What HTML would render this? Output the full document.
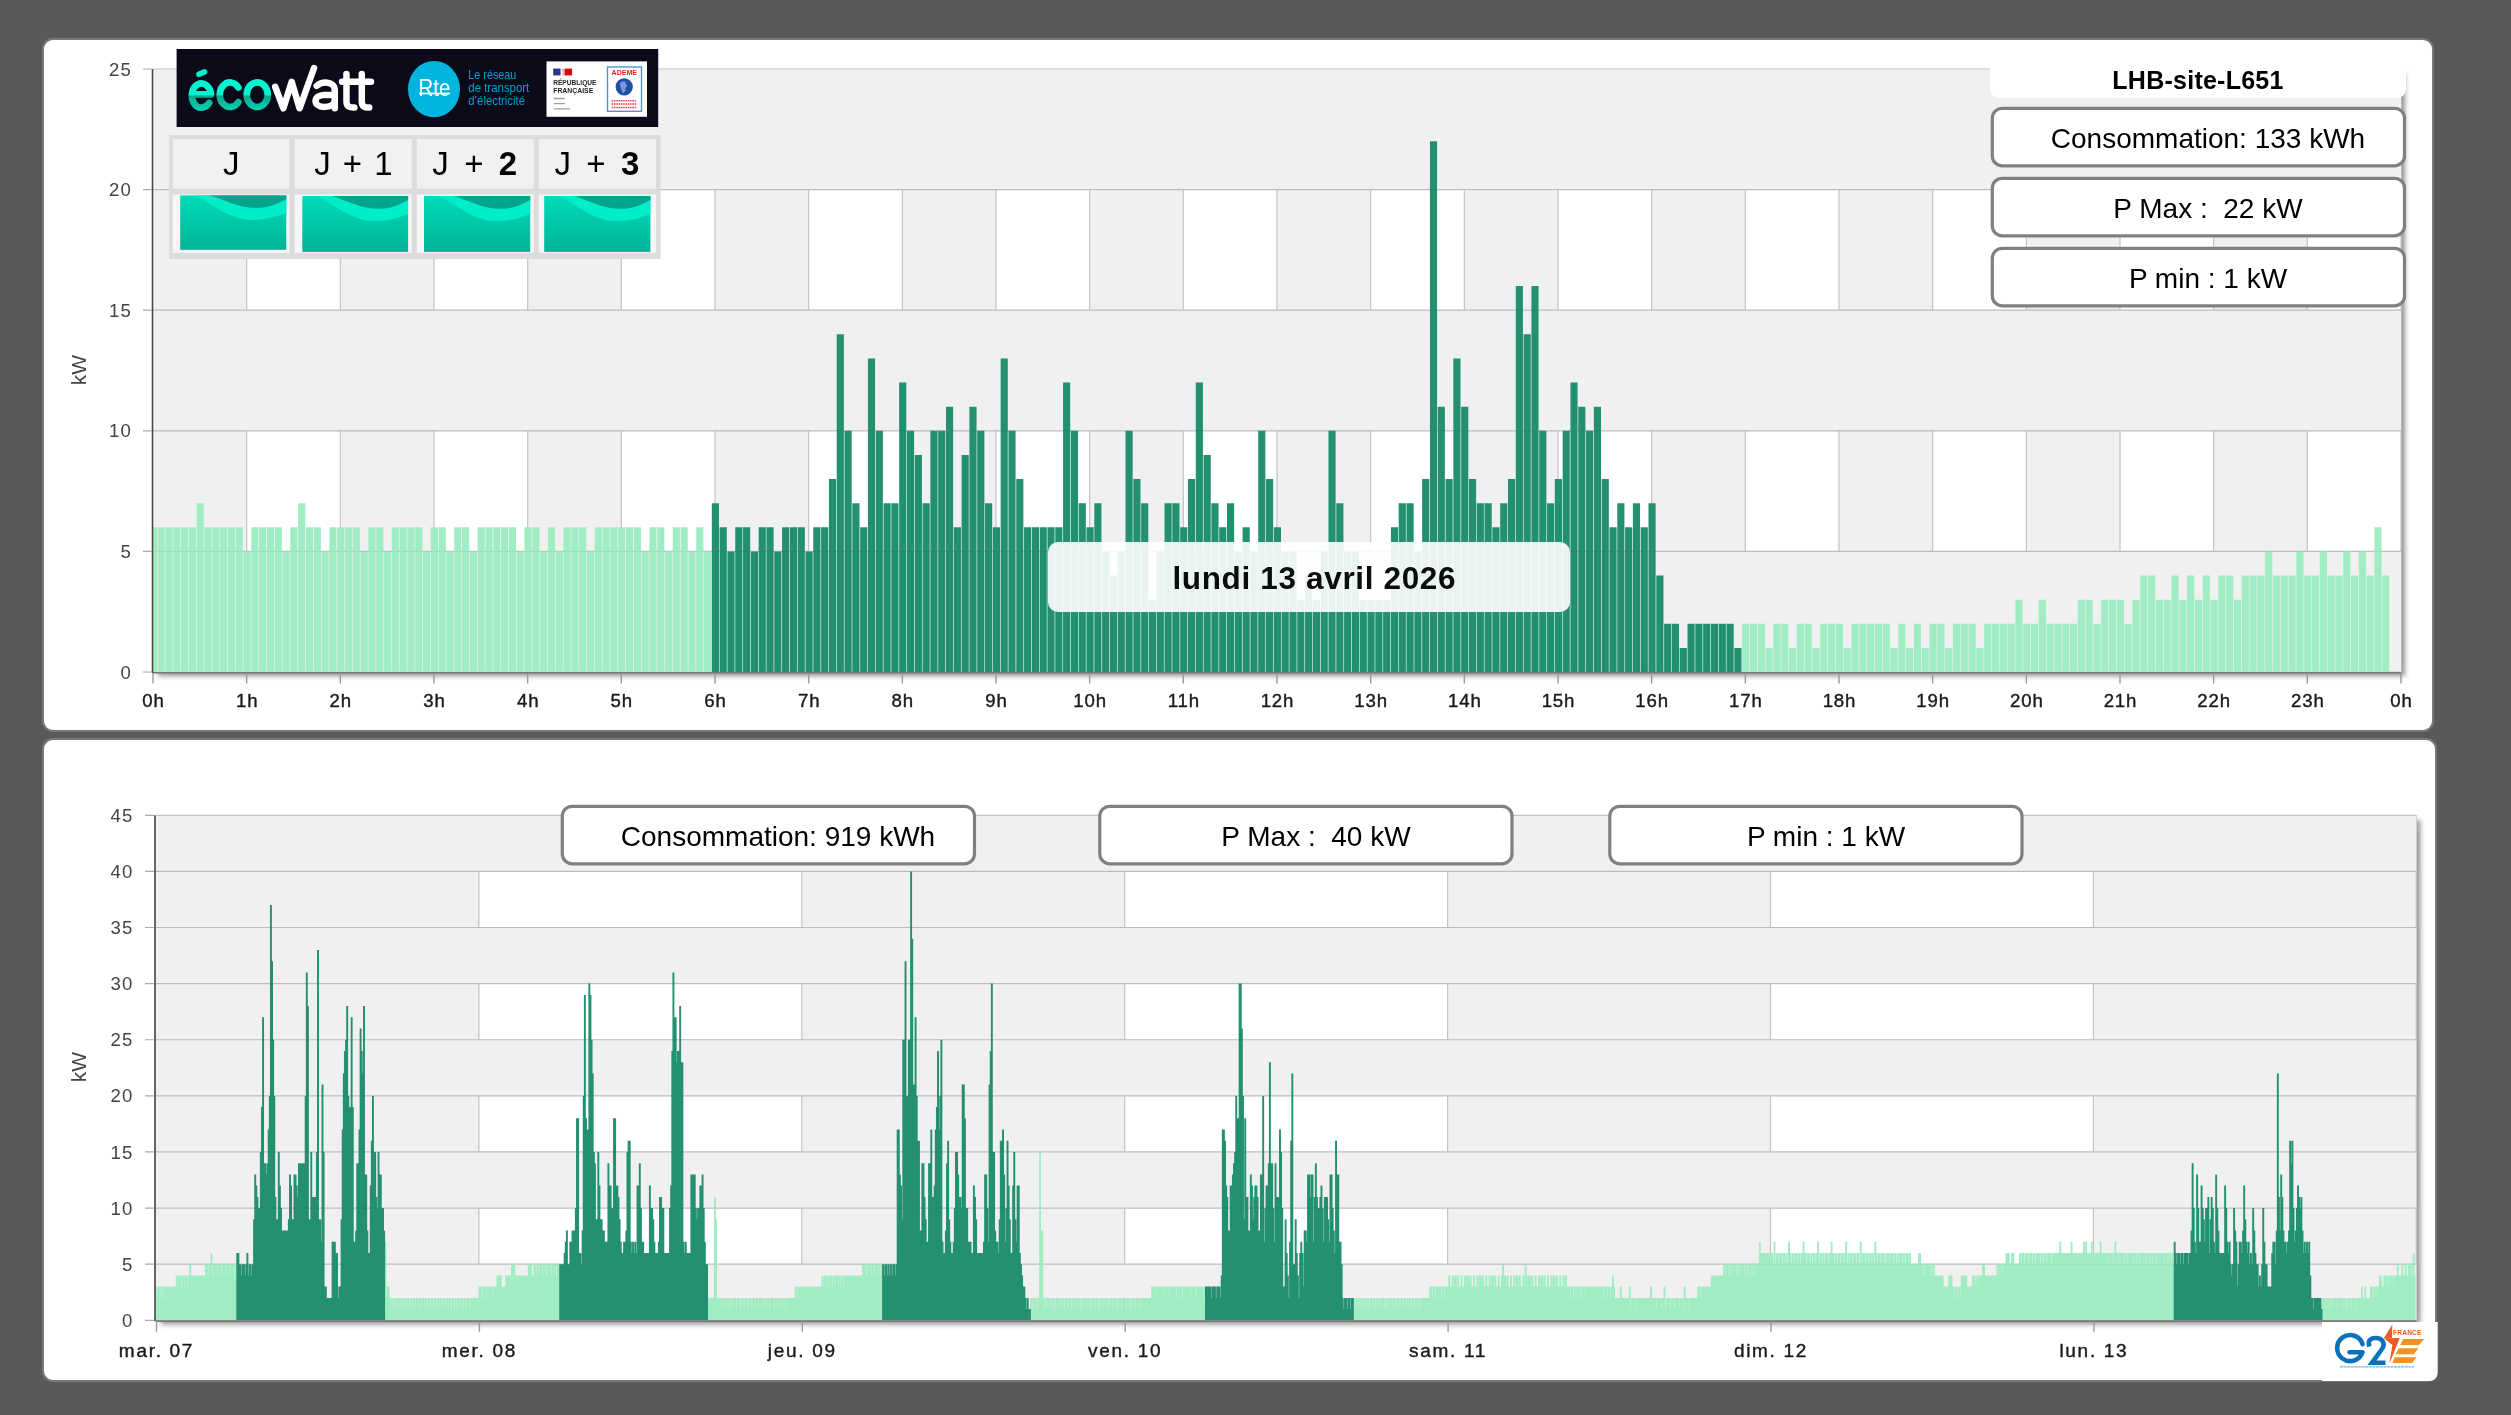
<!DOCTYPE html>
<html lang="fr"><head><meta charset="utf-8"><title>LHB-site-L651</title>
<style>
html,body{margin:0;padding:0}
body{width:2511px;height:1415px;background:#595959;overflow:hidden;position:relative;font-family:"Liberation Sans",sans-serif}
svg{position:absolute;left:0;top:0;will-change:transform}
text{font-family:"Liberation Sans",sans-serif}
</style></head><body>
<svg width="2511" height="1415" viewBox="0 0 2511 1415">
<defs>
<filter id="blur" x="-5%" y="-5%" width="110%" height="110%"><feGaussianBlur stdDeviation="2.8"/></filter>
<linearGradient id="tile" x1="0" x2="0" y1="0" y2="1"><stop offset="0" stop-color="#00dcb9"/><stop offset="1" stop-color="#00b396"/></linearGradient>
</defs>

<rect x="43" y="39" width="2390" height="692" rx="10" fill="#fff" stroke="#787878" stroke-width="2"/>
<rect x="43" y="739" width="2393" height="642" rx="10" fill="#fff" stroke="#787878" stroke-width="2"/>
<rect x="158.0" y="74.0" width="2247.0" height="602.0" fill="#000" fill-opacity="0.42" filter="url(#blur)"/>
<rect x="153.0" y="69.0" width="2248.0" height="603.0" fill="#fff"/>
<rect x="153.00" y="69.0" width="93.67" height="603.0" fill="#f0f0f0"/>
<rect x="340.33" y="69.0" width="93.67" height="603.0" fill="#f0f0f0"/>
<rect x="527.67" y="69.0" width="93.67" height="603.0" fill="#f0f0f0"/>
<rect x="715.00" y="69.0" width="93.67" height="603.0" fill="#f0f0f0"/>
<rect x="902.33" y="69.0" width="93.67" height="603.0" fill="#f0f0f0"/>
<rect x="1089.67" y="69.0" width="93.67" height="603.0" fill="#f0f0f0"/>
<rect x="1277.00" y="69.0" width="93.67" height="603.0" fill="#f0f0f0"/>
<rect x="1464.33" y="69.0" width="93.67" height="603.0" fill="#f0f0f0"/>
<rect x="1651.67" y="69.0" width="93.67" height="603.0" fill="#f0f0f0"/>
<rect x="1839.00" y="69.0" width="93.67" height="603.0" fill="#f0f0f0"/>
<rect x="2026.33" y="69.0" width="93.67" height="603.0" fill="#f0f0f0"/>
<rect x="2213.67" y="69.0" width="93.67" height="603.0" fill="#f0f0f0"/>
<path d="M246.67 69.0V672.0M340.33 69.0V672.0M434.00 69.0V672.0M527.67 69.0V672.0M621.33 69.0V672.0M715.00 69.0V672.0M808.67 69.0V672.0M902.33 69.0V672.0M996.00 69.0V672.0M1089.67 69.0V672.0M1183.33 69.0V672.0M1277.00 69.0V672.0M1370.67 69.0V672.0M1464.33 69.0V672.0M1558.00 69.0V672.0M1651.67 69.0V672.0M1745.33 69.0V672.0M1839.00 69.0V672.0M1932.67 69.0V672.0M2026.33 69.0V672.0M2120.00 69.0V672.0M2213.67 69.0V672.0M2307.33 69.0V672.0M2401.00 69.0V672.0" stroke="#c4c4c4" stroke-width="1.2" fill="none"/>
<rect x="153.0" y="69.00" width="2248.0" height="120.60" fill="#f0f0f0"/>
<rect x="153.0" y="310.20" width="2248.0" height="120.60" fill="#f0f0f0"/>
<rect x="153.0" y="551.40" width="2248.0" height="120.60" fill="#f0f0f0"/>
<path d="M153.0 672.00H2401.0M153.0 551.40H2401.0M153.0 430.80H2401.0M153.0 310.20H2401.0M153.0 189.60H2401.0M153.0 69.00H2401.0" stroke="#c4c4c4" stroke-width="1.2" fill="none"/>
<clipPath id="ctop"><rect x="153.0" y="69.0" width="2248.0" height="603.0"/></clipPath>
<g clip-path="url(#ctop)"><path d="M149.82 672.0V527.28h7.16V672.0zM157.63 672.0V527.28h7.16V672.0zM165.43 672.0V527.28h7.16V672.0zM173.24 672.0V527.28h7.16V672.0zM181.04 672.0V527.28h7.16V672.0zM188.85 672.0V527.28h7.16V672.0zM196.66 672.0V503.16h7.16V672.0zM204.46 672.0V527.28h7.16V672.0zM212.27 672.0V527.28h7.16V672.0zM220.07 672.0V527.28h7.16V672.0zM227.88 672.0V527.28h7.16V672.0zM235.68 672.0V527.28h7.16V672.0zM243.49 672.0V551.40h7.16V672.0zM251.29 672.0V527.28h7.16V672.0zM259.10 672.0V527.28h7.16V672.0zM266.91 672.0V527.28h7.16V672.0zM274.71 672.0V527.28h7.16V672.0zM282.52 672.0V551.40h7.16V672.0zM290.32 672.0V527.28h7.16V672.0zM298.13 672.0V503.16h7.16V672.0zM305.93 672.0V527.28h7.16V672.0zM313.74 672.0V527.28h7.16V672.0zM321.54 672.0V551.40h7.16V672.0zM329.35 672.0V527.28h7.16V672.0zM337.16 672.0V527.28h7.16V672.0zM344.96 672.0V527.28h7.16V672.0zM352.77 672.0V527.28h7.16V672.0zM360.57 672.0V551.40h7.16V672.0zM368.38 672.0V527.28h7.16V672.0zM376.18 672.0V527.28h7.16V672.0zM383.99 672.0V551.40h7.16V672.0zM391.79 672.0V527.28h7.16V672.0zM399.60 672.0V527.28h7.16V672.0zM407.41 672.0V527.28h7.16V672.0zM415.21 672.0V527.28h7.16V672.0zM423.02 672.0V551.40h7.16V672.0zM430.82 672.0V527.28h7.16V672.0zM438.63 672.0V527.28h7.16V672.0zM446.43 672.0V551.40h7.16V672.0zM454.24 672.0V527.28h7.16V672.0zM462.04 672.0V527.28h7.16V672.0zM469.85 672.0V551.40h7.16V672.0zM477.66 672.0V527.28h7.16V672.0zM485.46 672.0V527.28h7.16V672.0zM493.27 672.0V527.28h7.16V672.0zM501.07 672.0V527.28h7.16V672.0zM508.88 672.0V527.28h7.16V672.0zM516.68 672.0V551.40h7.16V672.0zM524.49 672.0V527.28h7.16V672.0zM532.29 672.0V527.28h7.16V672.0zM540.10 672.0V551.40h7.16V672.0zM547.91 672.0V527.28h7.16V672.0zM555.71 672.0V551.40h7.16V672.0zM563.52 672.0V527.28h7.16V672.0zM571.32 672.0V527.28h7.16V672.0zM579.13 672.0V527.28h7.16V672.0zM586.93 672.0V551.40h7.16V672.0zM594.74 672.0V527.28h7.16V672.0zM602.54 672.0V527.28h7.16V672.0zM610.35 672.0V527.28h7.16V672.0zM618.16 672.0V527.28h7.16V672.0zM625.96 672.0V527.28h7.16V672.0zM633.77 672.0V527.28h7.16V672.0zM641.57 672.0V551.40h7.16V672.0zM649.38 672.0V527.28h7.16V672.0zM657.18 672.0V527.28h7.16V672.0zM664.99 672.0V551.40h7.16V672.0zM672.79 672.0V527.28h7.16V672.0zM680.60 672.0V527.28h7.16V672.0zM688.41 672.0V551.40h7.16V672.0zM696.21 672.0V527.28h7.16V672.0zM704.02 672.0V551.40h7.16V672.0zM1742.16 672.0V623.76h7.16V672.0zM1749.96 672.0V623.76h7.16V672.0zM1757.77 672.0V623.76h7.16V672.0zM1765.57 672.0V647.88h7.16V672.0zM1773.38 672.0V623.76h7.16V672.0zM1781.18 672.0V623.76h7.16V672.0zM1788.99 672.0V647.88h7.16V672.0zM1796.79 672.0V623.76h7.16V672.0zM1804.60 672.0V623.76h7.16V672.0zM1812.41 672.0V647.88h7.16V672.0zM1820.21 672.0V623.76h7.16V672.0zM1828.02 672.0V623.76h7.16V672.0zM1835.82 672.0V623.76h7.16V672.0zM1843.63 672.0V647.88h7.16V672.0zM1851.43 672.0V623.76h7.16V672.0zM1859.24 672.0V623.76h7.16V672.0zM1867.04 672.0V623.76h7.16V672.0zM1874.85 672.0V623.76h7.16V672.0zM1882.66 672.0V623.76h7.16V672.0zM1890.46 672.0V647.88h7.16V672.0zM1898.27 672.0V623.76h7.16V672.0zM1906.07 672.0V647.88h7.16V672.0zM1913.88 672.0V623.76h7.16V672.0zM1921.68 672.0V647.88h7.16V672.0zM1929.49 672.0V623.76h7.16V672.0zM1937.29 672.0V623.76h7.16V672.0zM1945.10 672.0V647.88h7.16V672.0zM1952.91 672.0V623.76h7.16V672.0zM1960.71 672.0V623.76h7.16V672.0zM1968.52 672.0V623.76h7.16V672.0zM1976.32 672.0V647.88h7.16V672.0zM1984.13 672.0V623.76h7.16V672.0zM1991.93 672.0V623.76h7.16V672.0zM1999.74 672.0V623.76h7.16V672.0zM2007.54 672.0V623.76h7.16V672.0zM2015.35 672.0V599.64h7.16V672.0zM2023.16 672.0V623.76h7.16V672.0zM2030.96 672.0V623.76h7.16V672.0zM2038.77 672.0V599.64h7.16V672.0zM2046.57 672.0V623.76h7.16V672.0zM2054.38 672.0V623.76h7.16V672.0zM2062.18 672.0V623.76h7.16V672.0zM2069.99 672.0V623.76h7.16V672.0zM2077.79 672.0V599.64h7.16V672.0zM2085.60 672.0V599.64h7.16V672.0zM2093.41 672.0V623.76h7.16V672.0zM2101.21 672.0V599.64h7.16V672.0zM2109.02 672.0V599.64h7.16V672.0zM2116.82 672.0V599.64h7.16V672.0zM2124.63 672.0V623.76h7.16V672.0zM2132.43 672.0V599.64h7.16V672.0zM2140.24 672.0V575.52h7.16V672.0zM2148.04 672.0V575.52h7.16V672.0zM2155.85 672.0V599.64h7.16V672.0zM2163.66 672.0V599.64h7.16V672.0zM2171.46 672.0V575.52h7.16V672.0zM2179.27 672.0V599.64h7.16V672.0zM2187.07 672.0V575.52h7.16V672.0zM2194.88 672.0V599.64h7.16V672.0zM2202.68 672.0V575.52h7.16V672.0zM2210.49 672.0V599.64h7.16V672.0zM2218.29 672.0V575.52h7.16V672.0zM2226.10 672.0V575.52h7.16V672.0zM2233.91 672.0V599.64h7.16V672.0zM2241.71 672.0V575.52h7.16V672.0zM2249.52 672.0V575.52h7.16V672.0zM2257.32 672.0V575.52h7.16V672.0zM2265.13 672.0V551.40h7.16V672.0zM2272.93 672.0V575.52h7.16V672.0zM2280.74 672.0V575.52h7.16V672.0zM2288.54 672.0V575.52h7.16V672.0zM2296.35 672.0V551.40h7.16V672.0zM2304.16 672.0V575.52h7.16V672.0zM2311.96 672.0V575.52h7.16V672.0zM2319.77 672.0V551.40h7.16V672.0zM2327.57 672.0V575.52h7.16V672.0zM2335.38 672.0V575.52h7.16V672.0zM2343.18 672.0V551.40h7.16V672.0zM2350.99 672.0V575.52h7.16V672.0zM2358.79 672.0V551.40h7.16V672.0zM2366.60 672.0V575.52h7.16V672.0zM2374.41 672.0V527.28h7.16V672.0zM2382.21 672.0V575.52h7.16V672.0z" fill="#a0edc4"/><path d="M711.82 672.0V503.16h7.16V672.0zM719.63 672.0V527.28h7.16V672.0zM727.43 672.0V551.40h7.16V672.0zM735.24 672.0V527.28h7.16V672.0zM743.04 672.0V527.28h7.16V672.0zM750.85 672.0V551.40h7.16V672.0zM758.66 672.0V527.28h7.16V672.0zM766.46 672.0V527.28h7.16V672.0zM774.27 672.0V551.40h7.16V672.0zM782.07 672.0V527.28h7.16V672.0zM789.88 672.0V527.28h7.16V672.0zM797.68 672.0V527.28h7.16V672.0zM805.49 672.0V551.40h7.16V672.0zM813.29 672.0V527.28h7.16V672.0zM821.10 672.0V527.28h7.16V672.0zM828.91 672.0V479.04h7.16V672.0zM836.71 672.0V334.32h7.16V672.0zM844.52 672.0V430.80h7.16V672.0zM852.32 672.0V503.16h7.16V672.0zM860.13 672.0V527.28h7.16V672.0zM867.93 672.0V358.44h7.16V672.0zM875.74 672.0V430.80h7.16V672.0zM883.54 672.0V503.16h7.16V672.0zM891.35 672.0V503.16h7.16V672.0zM899.16 672.0V382.56h7.16V672.0zM906.96 672.0V430.80h7.16V672.0zM914.77 672.0V454.92h7.16V672.0zM922.57 672.0V503.16h7.16V672.0zM930.38 672.0V430.80h7.16V672.0zM938.18 672.0V430.80h7.16V672.0zM945.99 672.0V406.68h7.16V672.0zM953.79 672.0V527.28h7.16V672.0zM961.60 672.0V454.92h7.16V672.0zM969.41 672.0V406.68h7.16V672.0zM977.21 672.0V430.80h7.16V672.0zM985.02 672.0V503.16h7.16V672.0zM992.82 672.0V527.28h7.16V672.0zM1000.63 672.0V358.44h7.16V672.0zM1008.43 672.0V430.80h7.16V672.0zM1016.24 672.0V479.04h7.16V672.0zM1024.04 672.0V527.28h7.16V672.0zM1031.85 672.0V527.28h7.16V672.0zM1039.66 672.0V527.28h7.16V672.0zM1047.46 672.0V527.28h7.16V672.0zM1055.27 672.0V527.28h7.16V672.0zM1063.07 672.0V382.56h7.16V672.0zM1070.88 672.0V430.80h7.16V672.0zM1078.68 672.0V503.16h7.16V672.0zM1086.49 672.0V527.28h7.16V672.0zM1094.29 672.0V503.16h7.16V672.0zM1102.10 672.0V551.40h7.16V672.0zM1109.91 672.0V575.52h7.16V672.0zM1117.71 672.0V551.40h7.16V672.0zM1125.52 672.0V430.80h7.16V672.0zM1133.32 672.0V479.04h7.16V672.0zM1141.13 672.0V503.16h7.16V672.0zM1148.93 672.0V599.64h7.16V672.0zM1156.74 672.0V551.40h7.16V672.0zM1164.54 672.0V503.16h7.16V672.0zM1172.35 672.0V503.16h7.16V672.0zM1180.16 672.0V527.28h7.16V672.0zM1187.96 672.0V479.04h7.16V672.0zM1195.77 672.0V382.56h7.16V672.0zM1203.57 672.0V454.92h7.16V672.0zM1211.38 672.0V503.16h7.16V672.0zM1219.18 672.0V527.28h7.16V672.0zM1226.99 672.0V503.16h7.16V672.0zM1234.79 672.0V551.40h7.16V672.0zM1242.60 672.0V527.28h7.16V672.0zM1250.41 672.0V551.40h7.16V672.0zM1258.21 672.0V430.80h7.16V672.0zM1266.02 672.0V479.04h7.16V672.0zM1273.82 672.0V527.28h7.16V672.0zM1281.63 672.0V551.40h7.16V672.0zM1289.43 672.0V551.40h7.16V672.0zM1297.24 672.0V599.64h7.16V672.0zM1305.04 672.0V575.52h7.16V672.0zM1312.85 672.0V599.64h7.16V672.0zM1320.66 672.0V551.40h7.16V672.0zM1328.46 672.0V430.80h7.16V672.0zM1336.27 672.0V503.16h7.16V672.0zM1344.07 672.0V551.40h7.16V672.0zM1351.88 672.0V551.40h7.16V672.0zM1359.68 672.0V599.64h7.16V672.0zM1367.49 672.0V599.64h7.16V672.0zM1375.29 672.0V599.64h7.16V672.0zM1383.10 672.0V599.64h7.16V672.0zM1390.91 672.0V527.28h7.16V672.0zM1398.71 672.0V503.16h7.16V672.0zM1406.52 672.0V503.16h7.16V672.0zM1414.32 672.0V551.40h7.16V672.0zM1422.13 672.0V479.04h7.16V672.0zM1429.93 672.0V141.36h7.16V672.0zM1437.74 672.0V406.68h7.16V672.0zM1445.54 672.0V479.04h7.16V672.0zM1453.35 672.0V358.44h7.16V672.0zM1461.16 672.0V406.68h7.16V672.0zM1468.96 672.0V479.04h7.16V672.0zM1476.77 672.0V503.16h7.16V672.0zM1484.57 672.0V503.16h7.16V672.0zM1492.38 672.0V527.28h7.16V672.0zM1500.18 672.0V503.16h7.16V672.0zM1507.99 672.0V479.04h7.16V672.0zM1515.79 672.0V286.08h7.16V672.0zM1523.60 672.0V334.32h7.16V672.0zM1531.41 672.0V286.08h7.16V672.0zM1539.21 672.0V430.80h7.16V672.0zM1547.02 672.0V503.16h7.16V672.0zM1554.82 672.0V479.04h7.16V672.0zM1562.63 672.0V430.80h7.16V672.0zM1570.43 672.0V382.56h7.16V672.0zM1578.24 672.0V406.68h7.16V672.0zM1586.04 672.0V430.80h7.16V672.0zM1593.85 672.0V406.68h7.16V672.0zM1601.66 672.0V479.04h7.16V672.0zM1609.46 672.0V527.28h7.16V672.0zM1617.27 672.0V503.16h7.16V672.0zM1625.07 672.0V527.28h7.16V672.0zM1632.88 672.0V503.16h7.16V672.0zM1640.68 672.0V527.28h7.16V672.0zM1648.49 672.0V503.16h7.16V672.0zM1656.29 672.0V575.52h7.16V672.0zM1664.10 672.0V623.76h7.16V672.0zM1671.91 672.0V623.76h7.16V672.0zM1679.71 672.0V647.88h7.16V672.0zM1687.52 672.0V623.76h7.16V672.0zM1695.32 672.0V623.76h7.16V672.0zM1703.13 672.0V623.76h7.16V672.0zM1710.93 672.0V623.76h7.16V672.0zM1718.74 672.0V623.76h7.16V672.0zM1726.54 672.0V623.76h7.16V672.0zM1734.35 672.0V647.88h7.16V672.0z" fill="#239170"/></g>
<path d="M153.0 551.40H2401.0M153.0 430.80H2401.0M153.0 310.20H2401.0M153.0 189.60H2401.0" stroke="#000" stroke-opacity="0.045" stroke-width="1" fill="none"/>
<path d="M152.5 69.0V673.0" stroke="#4a4a4a" stroke-width="1.6" fill="none"/>
<path d="M153.0 672.8H2401.0" stroke="#777" stroke-width="1.6" fill="none"/>
<path d="M143.0 672.00H152.0M143.0 551.40H152.0M143.0 430.80H152.0M143.0 310.20H152.0M143.0 189.60H152.0M143.0 69.00H152.0" stroke="#aaa" stroke-width="1.2" fill="none"/>
<path d="M153.00 673.0V683.5M246.67 673.0V683.5M340.33 673.0V683.5M434.00 673.0V683.5M527.67 673.0V683.5M621.33 673.0V683.5M715.00 673.0V683.5M808.67 673.0V683.5M902.33 673.0V683.5M996.00 673.0V683.5M1089.67 673.0V683.5M1183.33 673.0V683.5M1277.00 673.0V683.5M1370.67 673.0V683.5M1464.33 673.0V683.5M1558.00 673.0V683.5M1651.67 673.0V683.5M1745.33 673.0V683.5M1839.00 673.0V683.5M1932.67 673.0V683.5M2026.33 673.0V683.5M2120.00 673.0V683.5M2213.67 673.0V683.5M2307.33 673.0V683.5M2401.00 673.0V683.5" stroke="#9a9a9a" stroke-width="1.4" fill="none"/>
<text x="132" y="678.5" font-size="18.6" letter-spacing="1.2" text-anchor="end" fill="#444">0</text>
<text x="132" y="557.9" font-size="18.6" letter-spacing="1.2" text-anchor="end" fill="#444">5</text>
<text x="132" y="437.3" font-size="18.6" letter-spacing="1.2" text-anchor="end" fill="#444">10</text>
<text x="132" y="316.7" font-size="18.6" letter-spacing="1.2" text-anchor="end" fill="#444">15</text>
<text x="132" y="196.1" font-size="18.6" letter-spacing="1.2" text-anchor="end" fill="#444">20</text>
<text x="132" y="75.5" font-size="18.6" letter-spacing="1.2" text-anchor="end" fill="#444">25</text>
<text x="153.5" y="706.5" font-size="18.6" letter-spacing="0.9" text-anchor="middle" fill="#1a1a1a" stroke="#1a1a1a" stroke-width="0.4">0h</text>
<text x="247.2" y="706.5" font-size="18.6" letter-spacing="0.9" text-anchor="middle" fill="#1a1a1a" stroke="#1a1a1a" stroke-width="0.4">1h</text>
<text x="340.8" y="706.5" font-size="18.6" letter-spacing="0.9" text-anchor="middle" fill="#1a1a1a" stroke="#1a1a1a" stroke-width="0.4">2h</text>
<text x="434.5" y="706.5" font-size="18.6" letter-spacing="0.9" text-anchor="middle" fill="#1a1a1a" stroke="#1a1a1a" stroke-width="0.4">3h</text>
<text x="528.2" y="706.5" font-size="18.6" letter-spacing="0.9" text-anchor="middle" fill="#1a1a1a" stroke="#1a1a1a" stroke-width="0.4">4h</text>
<text x="621.8" y="706.5" font-size="18.6" letter-spacing="0.9" text-anchor="middle" fill="#1a1a1a" stroke="#1a1a1a" stroke-width="0.4">5h</text>
<text x="715.5" y="706.5" font-size="18.6" letter-spacing="0.9" text-anchor="middle" fill="#1a1a1a" stroke="#1a1a1a" stroke-width="0.4">6h</text>
<text x="809.2" y="706.5" font-size="18.6" letter-spacing="0.9" text-anchor="middle" fill="#1a1a1a" stroke="#1a1a1a" stroke-width="0.4">7h</text>
<text x="902.8" y="706.5" font-size="18.6" letter-spacing="0.9" text-anchor="middle" fill="#1a1a1a" stroke="#1a1a1a" stroke-width="0.4">8h</text>
<text x="996.5" y="706.5" font-size="18.6" letter-spacing="0.9" text-anchor="middle" fill="#1a1a1a" stroke="#1a1a1a" stroke-width="0.4">9h</text>
<text x="1090.2" y="706.5" font-size="18.6" letter-spacing="0.9" text-anchor="middle" fill="#1a1a1a" stroke="#1a1a1a" stroke-width="0.4">10h</text>
<text x="1183.8" y="706.5" font-size="18.6" letter-spacing="0.9" text-anchor="middle" fill="#1a1a1a" stroke="#1a1a1a" stroke-width="0.4">11h</text>
<text x="1277.5" y="706.5" font-size="18.6" letter-spacing="0.9" text-anchor="middle" fill="#1a1a1a" stroke="#1a1a1a" stroke-width="0.4">12h</text>
<text x="1371.2" y="706.5" font-size="18.6" letter-spacing="0.9" text-anchor="middle" fill="#1a1a1a" stroke="#1a1a1a" stroke-width="0.4">13h</text>
<text x="1464.8" y="706.5" font-size="18.6" letter-spacing="0.9" text-anchor="middle" fill="#1a1a1a" stroke="#1a1a1a" stroke-width="0.4">14h</text>
<text x="1558.5" y="706.5" font-size="18.6" letter-spacing="0.9" text-anchor="middle" fill="#1a1a1a" stroke="#1a1a1a" stroke-width="0.4">15h</text>
<text x="1652.2" y="706.5" font-size="18.6" letter-spacing="0.9" text-anchor="middle" fill="#1a1a1a" stroke="#1a1a1a" stroke-width="0.4">16h</text>
<text x="1745.8" y="706.5" font-size="18.6" letter-spacing="0.9" text-anchor="middle" fill="#1a1a1a" stroke="#1a1a1a" stroke-width="0.4">17h</text>
<text x="1839.5" y="706.5" font-size="18.6" letter-spacing="0.9" text-anchor="middle" fill="#1a1a1a" stroke="#1a1a1a" stroke-width="0.4">18h</text>
<text x="1933.2" y="706.5" font-size="18.6" letter-spacing="0.9" text-anchor="middle" fill="#1a1a1a" stroke="#1a1a1a" stroke-width="0.4">19h</text>
<text x="2026.8" y="706.5" font-size="18.6" letter-spacing="0.9" text-anchor="middle" fill="#1a1a1a" stroke="#1a1a1a" stroke-width="0.4">20h</text>
<text x="2120.5" y="706.5" font-size="18.6" letter-spacing="0.9" text-anchor="middle" fill="#1a1a1a" stroke="#1a1a1a" stroke-width="0.4">21h</text>
<text x="2214.2" y="706.5" font-size="18.6" letter-spacing="0.9" text-anchor="middle" fill="#1a1a1a" stroke="#1a1a1a" stroke-width="0.4">22h</text>
<text x="2307.8" y="706.5" font-size="18.6" letter-spacing="0.9" text-anchor="middle" fill="#1a1a1a" stroke="#1a1a1a" stroke-width="0.4">23h</text>
<text x="2401.5" y="706.5" font-size="18.6" letter-spacing="0.9" text-anchor="middle" fill="#1a1a1a" stroke="#1a1a1a" stroke-width="0.4">0h</text>
<text transform="translate(86,370) rotate(-90)" font-size="21" text-anchor="middle" fill="#444">kW</text>
<rect x="161.0" y="820.3" width="2259.3" height="504.0" fill="#000" fill-opacity="0.42" filter="url(#blur)"/>
<rect x="156.0" y="815.3" width="2260.3" height="505.0" fill="#fff"/>
<rect x="156.00" y="815.3" width="322.90" height="505.0" fill="#f0f0f0"/>
<rect x="801.80" y="815.3" width="322.90" height="505.0" fill="#f0f0f0"/>
<rect x="1447.60" y="815.3" width="322.90" height="505.0" fill="#f0f0f0"/>
<rect x="2093.40" y="815.3" width="322.90" height="505.0" fill="#f0f0f0"/>
<path d="M478.90 815.3V1320.3M801.80 815.3V1320.3M1124.70 815.3V1320.3M1447.60 815.3V1320.3M1770.50 815.3V1320.3M2093.40 815.3V1320.3M2416.30 815.3V1320.3" stroke="#c4c4c4" stroke-width="1.2" fill="none"/>
<rect x="156.0" y="815.30" width="2260.3" height="56.11" fill="#f0f0f0"/>
<rect x="156.0" y="927.52" width="2260.3" height="56.11" fill="#f0f0f0"/>
<rect x="156.0" y="1039.74" width="2260.3" height="56.11" fill="#f0f0f0"/>
<rect x="156.0" y="1151.97" width="2260.3" height="56.11" fill="#f0f0f0"/>
<rect x="156.0" y="1264.19" width="2260.3" height="56.11" fill="#f0f0f0"/>
<path d="M156.0 1320.30H2416.3M156.0 1264.19H2416.3M156.0 1208.08H2416.3M156.0 1151.97H2416.3M156.0 1095.86H2416.3M156.0 1039.74H2416.3M156.0 983.63H2416.3M156.0 927.52H2416.3M156.0 871.41H2416.3M156.0 815.30H2416.3" stroke="#c4c4c4" stroke-width="1.2" fill="none"/>
<path d="M155.60 1320.3V1286.6h1.92V1320.3zM156.72 1320.3V1297.9h1.92V1320.3zM157.84 1320.3V1286.6h3.04V1320.3zM160.08 1320.3V1297.9h1.92V1320.3zM161.21 1320.3V1286.6h1.92V1320.3zM162.33 1320.3V1297.9h1.92V1320.3zM163.45 1320.3V1286.6h13.13V1320.3zM175.78 1320.3V1275.4h1.92V1320.3zM176.90 1320.3V1286.6h1.92V1320.3zM178.02 1320.3V1275.4h3.04V1320.3zM180.27 1320.3V1286.6h1.92V1320.3zM181.39 1320.3V1275.4h3.04V1320.3zM183.63 1320.3V1286.6h1.92V1320.3zM184.75 1320.3V1275.4h3.04V1320.3zM186.99 1320.3V1286.6h1.92V1320.3zM188.11 1320.3V1275.4h1.92V1320.3zM189.24 1320.3V1264.2h1.92V1320.3zM190.36 1320.3V1275.4h15.38V1320.3zM204.93 1320.3V1264.2h3.04V1320.3zM207.17 1320.3V1275.4h1.92V1320.3zM208.30 1320.3V1264.2h3.04V1320.3zM210.54 1320.3V1253.0h1.92V1320.3zM211.66 1320.3V1275.4h1.92V1320.3zM212.78 1320.3V1264.2h4.16V1320.3zM216.14 1320.3V1275.4h1.92V1320.3zM217.26 1320.3V1264.2h4.16V1320.3zM220.63 1320.3V1275.4h1.92V1320.3zM221.75 1320.3V1264.2h4.16V1320.3zM225.11 1320.3V1275.4h1.92V1320.3zM226.23 1320.3V1264.2h4.16V1320.3zM229.60 1320.3V1275.4h1.92V1320.3zM230.72 1320.3V1264.2h4.16V1320.3zM234.08 1320.3V1275.4h1.92V1320.3zM235.20 1320.3V1264.2h1.92V1320.3zM384.32 1320.3V1241.7h1.92V1320.3zM385.44 1320.3V1297.9h1.92V1320.3zM386.56 1320.3V1286.6h3.04V1320.3zM388.81 1320.3V1297.9h3.04V1320.3zM391.05 1320.3V1309.1h1.92V1320.3zM392.17 1320.3V1297.9h1.92V1320.3zM393.29 1320.3V1309.1h1.92V1320.3zM394.41 1320.3V1297.9h3.04V1320.3zM396.65 1320.3V1309.1h1.92V1320.3zM397.77 1320.3V1297.9h3.04V1320.3zM400.02 1320.3V1309.1h1.92V1320.3zM401.14 1320.3V1297.9h1.92V1320.3zM402.26 1320.3V1309.1h1.92V1320.3zM403.38 1320.3V1297.9h3.04V1320.3zM405.62 1320.3V1309.1h1.92V1320.3zM406.74 1320.3V1297.9h3.04V1320.3zM408.99 1320.3V1309.1h1.92V1320.3zM410.11 1320.3V1297.9h1.92V1320.3zM411.23 1320.3V1309.1h1.92V1320.3zM412.35 1320.3V1297.9h3.04V1320.3zM414.59 1320.3V1309.1h1.92V1320.3zM415.71 1320.3V1297.9h3.04V1320.3zM417.96 1320.3V1309.1h1.92V1320.3zM419.08 1320.3V1297.9h1.92V1320.3zM420.20 1320.3V1309.1h1.92V1320.3zM421.32 1320.3V1297.9h3.04V1320.3zM423.56 1320.3V1309.1h1.92V1320.3zM424.68 1320.3V1297.9h3.04V1320.3zM426.93 1320.3V1309.1h1.92V1320.3zM428.05 1320.3V1297.9h1.92V1320.3zM429.17 1320.3V1309.1h1.92V1320.3zM430.29 1320.3V1297.9h3.04V1320.3zM432.53 1320.3V1309.1h1.92V1320.3zM433.65 1320.3V1297.9h3.04V1320.3zM435.90 1320.3V1309.1h1.92V1320.3zM437.02 1320.3V1297.9h1.92V1320.3zM438.14 1320.3V1309.1h1.92V1320.3zM439.26 1320.3V1297.9h3.04V1320.3zM441.50 1320.3V1309.1h1.92V1320.3zM442.62 1320.3V1297.9h3.04V1320.3zM444.86 1320.3V1309.1h1.92V1320.3zM445.99 1320.3V1297.9h1.92V1320.3zM447.11 1320.3V1309.1h1.92V1320.3zM448.23 1320.3V1297.9h3.04V1320.3zM450.47 1320.3V1309.1h1.92V1320.3zM451.59 1320.3V1297.9h3.04V1320.3zM453.83 1320.3V1309.1h1.92V1320.3zM454.96 1320.3V1297.9h1.92V1320.3zM456.08 1320.3V1309.1h1.92V1320.3zM457.20 1320.3V1297.9h3.04V1320.3zM459.44 1320.3V1309.1h1.92V1320.3zM460.56 1320.3V1297.9h3.04V1320.3zM462.80 1320.3V1309.1h1.92V1320.3zM463.92 1320.3V1297.9h1.92V1320.3zM465.05 1320.3V1309.1h1.92V1320.3zM466.17 1320.3V1297.9h3.04V1320.3zM468.41 1320.3V1309.1h1.92V1320.3zM469.53 1320.3V1297.9h9.77V1320.3zM478.50 1320.3V1286.6h4.16V1320.3zM481.86 1320.3V1297.9h1.92V1320.3zM482.98 1320.3V1286.6h3.04V1320.3zM485.23 1320.3V1297.9h1.92V1320.3zM486.35 1320.3V1286.6h6.41V1320.3zM491.95 1320.3V1297.9h1.92V1320.3zM493.08 1320.3V1286.6h4.16V1320.3zM496.44 1320.3V1275.4h5.28V1320.3zM500.92 1320.3V1286.6h5.28V1320.3zM505.41 1320.3V1275.4h5.28V1320.3zM509.89 1320.3V1286.6h1.92V1320.3zM511.01 1320.3V1264.2h4.16V1320.3zM514.38 1320.3V1275.4h14.25V1320.3zM527.83 1320.3V1264.2h4.16V1320.3zM531.20 1320.3V1275.4h3.04V1320.3zM533.44 1320.3V1264.2h3.04V1320.3zM535.68 1320.3V1275.4h1.92V1320.3zM536.80 1320.3V1264.2h1.92V1320.3zM537.92 1320.3V1275.4h1.92V1320.3zM539.04 1320.3V1264.2h3.04V1320.3zM541.29 1320.3V1275.4h1.92V1320.3zM542.41 1320.3V1264.2h3.04V1320.3zM544.65 1320.3V1275.4h1.92V1320.3zM545.77 1320.3V1264.2h1.92V1320.3zM546.89 1320.3V1275.4h1.92V1320.3zM548.01 1320.3V1264.2h3.04V1320.3zM550.26 1320.3V1275.4h1.92V1320.3zM551.38 1320.3V1264.2h3.04V1320.3zM553.62 1320.3V1275.4h1.92V1320.3zM554.74 1320.3V1264.2h1.92V1320.3zM555.86 1320.3V1275.4h1.92V1320.3zM556.98 1320.3V1264.2h3.04V1320.3zM707.22 1320.3V1297.9h7.53V1320.3zM713.95 1320.3V1196.9h1.92V1320.3zM715.07 1320.3V1219.3h1.92V1320.3zM716.19 1320.3V1297.9h5.28V1320.3zM720.67 1320.3V1309.1h1.92V1320.3zM721.80 1320.3V1297.9h3.04V1320.3zM724.04 1320.3V1309.1h1.92V1320.3zM725.16 1320.3V1297.9h4.16V1320.3zM728.52 1320.3V1309.1h1.92V1320.3zM729.64 1320.3V1297.9h3.04V1320.3zM731.89 1320.3V1309.1h1.92V1320.3zM733.01 1320.3V1297.9h3.04V1320.3zM735.25 1320.3V1309.1h1.92V1320.3zM736.37 1320.3V1297.9h4.16V1320.3zM739.74 1320.3V1309.1h1.92V1320.3zM740.86 1320.3V1297.9h3.04V1320.3zM743.10 1320.3V1309.1h1.92V1320.3zM744.22 1320.3V1297.9h3.04V1320.3zM746.46 1320.3V1309.1h1.92V1320.3zM747.58 1320.3V1297.9h4.16V1320.3zM750.95 1320.3V1309.1h1.92V1320.3zM752.07 1320.3V1297.9h3.04V1320.3zM754.31 1320.3V1309.1h1.92V1320.3zM755.43 1320.3V1297.9h3.04V1320.3zM757.67 1320.3V1309.1h1.92V1320.3zM758.80 1320.3V1297.9h4.16V1320.3zM762.16 1320.3V1309.1h1.92V1320.3zM763.28 1320.3V1297.9h3.04V1320.3zM765.52 1320.3V1309.1h1.92V1320.3zM766.64 1320.3V1297.9h3.04V1320.3zM768.89 1320.3V1309.1h1.92V1320.3zM770.01 1320.3V1297.9h4.16V1320.3zM773.37 1320.3V1309.1h1.92V1320.3zM774.49 1320.3V1297.9h3.04V1320.3zM776.73 1320.3V1309.1h1.92V1320.3zM777.86 1320.3V1297.9h3.04V1320.3zM780.10 1320.3V1309.1h1.92V1320.3zM781.22 1320.3V1297.9h4.16V1320.3zM784.58 1320.3V1309.1h1.92V1320.3zM785.70 1320.3V1297.9h9.77V1320.3zM794.67 1320.3V1286.6h3.04V1320.3zM796.92 1320.3V1297.9h1.92V1320.3zM798.04 1320.3V1286.6h24.34V1320.3zM821.58 1320.3V1275.4h1.92V1320.3zM822.70 1320.3V1286.6h1.92V1320.3zM823.82 1320.3V1275.4h3.04V1320.3zM826.07 1320.3V1286.6h1.92V1320.3zM827.19 1320.3V1275.4h1.92V1320.3zM828.31 1320.3V1286.6h1.92V1320.3zM829.43 1320.3V1275.4h3.04V1320.3zM831.67 1320.3V1286.6h1.92V1320.3zM832.79 1320.3V1275.4h1.92V1320.3zM833.91 1320.3V1286.6h1.92V1320.3zM835.04 1320.3V1275.4h3.04V1320.3zM837.28 1320.3V1286.6h1.92V1320.3zM838.40 1320.3V1275.4h1.92V1320.3zM839.52 1320.3V1286.6h1.92V1320.3zM840.64 1320.3V1275.4h3.04V1320.3zM842.88 1320.3V1286.6h1.92V1320.3zM844.00 1320.3V1275.4h18.74V1320.3zM861.94 1320.3V1264.2h3.04V1320.3zM864.19 1320.3V1275.4h1.92V1320.3zM865.31 1320.3V1264.2h1.92V1320.3zM866.43 1320.3V1275.4h1.92V1320.3zM867.55 1320.3V1264.2h4.16V1320.3zM870.91 1320.3V1275.4h1.92V1320.3zM872.03 1320.3V1264.2h1.92V1320.3zM873.16 1320.3V1275.4h1.92V1320.3zM874.28 1320.3V1264.2h4.16V1320.3zM877.64 1320.3V1275.4h1.92V1320.3zM878.76 1320.3V1264.2h1.92V1320.3zM879.88 1320.3V1275.4h1.92V1320.3zM881.00 1320.3V1264.2h1.92V1320.3zM1030.12 1320.3V1297.9h1.92V1320.3zM1031.24 1320.3V1309.1h1.92V1320.3zM1032.36 1320.3V1297.9h3.04V1320.3zM1034.61 1320.3V1309.1h1.92V1320.3zM1035.73 1320.3V1297.9h1.92V1320.3zM1036.85 1320.3V1309.1h1.92V1320.3zM1037.97 1320.3V1297.9h1.92V1320.3zM1039.09 1320.3V1152.0h1.92V1320.3zM1040.21 1320.3V1230.5h3.04V1320.3zM1042.45 1320.3V1297.9h1.92V1320.3zM1043.57 1320.3V1309.1h1.92V1320.3zM1044.70 1320.3V1297.9h1.92V1320.3zM1045.82 1320.3V1309.1h1.92V1320.3zM1046.94 1320.3V1297.9h3.04V1320.3zM1049.18 1320.3V1309.1h1.92V1320.3zM1050.30 1320.3V1297.9h3.04V1320.3zM1052.54 1320.3V1309.1h1.92V1320.3zM1053.67 1320.3V1297.9h1.92V1320.3zM1054.79 1320.3V1309.1h1.92V1320.3zM1055.91 1320.3V1297.9h3.04V1320.3zM1058.15 1320.3V1309.1h1.92V1320.3zM1059.27 1320.3V1297.9h3.04V1320.3zM1061.51 1320.3V1309.1h1.92V1320.3zM1062.64 1320.3V1297.9h1.92V1320.3zM1063.76 1320.3V1309.1h1.92V1320.3zM1064.88 1320.3V1297.9h3.04V1320.3zM1067.12 1320.3V1309.1h1.92V1320.3zM1068.24 1320.3V1297.9h3.04V1320.3zM1070.48 1320.3V1309.1h1.92V1320.3zM1071.60 1320.3V1297.9h1.92V1320.3zM1072.73 1320.3V1309.1h1.92V1320.3zM1073.85 1320.3V1297.9h3.04V1320.3zM1076.09 1320.3V1309.1h1.92V1320.3zM1077.21 1320.3V1297.9h3.04V1320.3zM1079.45 1320.3V1309.1h1.92V1320.3zM1080.57 1320.3V1297.9h1.92V1320.3zM1081.70 1320.3V1309.1h1.92V1320.3zM1082.82 1320.3V1297.9h3.04V1320.3zM1085.06 1320.3V1309.1h1.92V1320.3zM1086.18 1320.3V1297.9h3.04V1320.3zM1088.42 1320.3V1309.1h1.92V1320.3zM1089.54 1320.3V1297.9h1.92V1320.3zM1090.66 1320.3V1309.1h1.92V1320.3zM1091.79 1320.3V1297.9h3.04V1320.3zM1094.03 1320.3V1309.1h1.92V1320.3zM1095.15 1320.3V1297.9h3.04V1320.3zM1097.39 1320.3V1309.1h1.92V1320.3zM1098.51 1320.3V1297.9h1.92V1320.3zM1099.63 1320.3V1309.1h1.92V1320.3zM1100.76 1320.3V1297.9h3.04V1320.3zM1103.00 1320.3V1309.1h1.92V1320.3zM1104.12 1320.3V1297.9h3.04V1320.3zM1106.36 1320.3V1309.1h1.92V1320.3zM1107.48 1320.3V1297.9h1.92V1320.3zM1108.60 1320.3V1309.1h1.92V1320.3zM1109.72 1320.3V1297.9h3.04V1320.3zM1111.97 1320.3V1309.1h1.92V1320.3zM1113.09 1320.3V1297.9h3.04V1320.3zM1115.33 1320.3V1309.1h1.92V1320.3zM1116.45 1320.3V1297.9h1.92V1320.3zM1117.57 1320.3V1309.1h1.92V1320.3zM1118.69 1320.3V1297.9h3.04V1320.3zM1120.94 1320.3V1309.1h1.92V1320.3zM1122.06 1320.3V1297.9h4.16V1320.3zM1125.42 1320.3V1309.1h1.92V1320.3zM1126.54 1320.3V1297.9h3.04V1320.3zM1128.78 1320.3V1309.1h1.92V1320.3zM1129.91 1320.3V1297.9h1.92V1320.3zM1131.03 1320.3V1309.1h1.92V1320.3zM1132.15 1320.3V1297.9h3.04V1320.3zM1134.39 1320.3V1309.1h1.92V1320.3zM1135.51 1320.3V1297.9h3.04V1320.3zM1137.75 1320.3V1309.1h1.92V1320.3zM1138.88 1320.3V1297.9h1.92V1320.3zM1140.00 1320.3V1309.1h1.92V1320.3zM1141.12 1320.3V1297.9h10.89V1320.3zM1151.21 1320.3V1286.6h4.16V1320.3zM1154.57 1320.3V1297.9h1.92V1320.3zM1155.69 1320.3V1286.6h7.53V1320.3zM1162.42 1320.3V1297.9h1.92V1320.3zM1163.54 1320.3V1286.6h5.28V1320.3zM1168.03 1320.3V1297.9h1.92V1320.3zM1169.15 1320.3V1286.6h7.53V1320.3zM1175.87 1320.3V1297.9h1.92V1320.3zM1177.00 1320.3V1286.6h5.28V1320.3zM1181.48 1320.3V1297.9h1.92V1320.3zM1182.60 1320.3V1286.6h7.53V1320.3zM1189.33 1320.3V1297.9h1.92V1320.3zM1190.45 1320.3V1286.6h5.28V1320.3zM1194.93 1320.3V1297.9h1.92V1320.3zM1196.06 1320.3V1286.6h7.53V1320.3zM1202.78 1320.3V1297.9h1.92V1320.3zM1203.90 1320.3V1286.6h1.92V1320.3zM1353.02 1320.3V1297.9h1.92V1320.3zM1354.14 1320.3V1309.1h1.92V1320.3zM1355.26 1320.3V1297.9h3.04V1320.3zM1357.51 1320.3V1309.1h1.92V1320.3zM1358.63 1320.3V1297.9h3.04V1320.3zM1360.87 1320.3V1309.1h1.92V1320.3zM1361.99 1320.3V1297.9h1.92V1320.3zM1363.11 1320.3V1309.1h1.92V1320.3zM1364.23 1320.3V1297.9h1.92V1320.3zM1365.35 1320.3V1309.1h1.92V1320.3zM1366.47 1320.3V1297.9h3.04V1320.3zM1368.72 1320.3V1309.1h1.92V1320.3zM1369.84 1320.3V1297.9h3.04V1320.3zM1372.08 1320.3V1309.1h1.92V1320.3zM1373.20 1320.3V1297.9h1.92V1320.3zM1374.32 1320.3V1309.1h1.92V1320.3zM1375.44 1320.3V1297.9h1.92V1320.3zM1376.57 1320.3V1309.1h1.92V1320.3zM1377.69 1320.3V1297.9h3.04V1320.3zM1379.93 1320.3V1309.1h1.92V1320.3zM1381.05 1320.3V1297.9h3.04V1320.3zM1383.29 1320.3V1309.1h1.92V1320.3zM1384.41 1320.3V1297.9h1.92V1320.3zM1385.54 1320.3V1309.1h1.92V1320.3zM1386.66 1320.3V1297.9h1.92V1320.3zM1387.78 1320.3V1309.1h1.92V1320.3zM1388.90 1320.3V1297.9h3.04V1320.3zM1391.14 1320.3V1309.1h1.92V1320.3zM1392.26 1320.3V1297.9h3.04V1320.3zM1394.50 1320.3V1309.1h1.92V1320.3zM1395.63 1320.3V1297.9h1.92V1320.3zM1396.75 1320.3V1309.1h1.92V1320.3zM1397.87 1320.3V1297.9h1.92V1320.3zM1398.99 1320.3V1309.1h1.92V1320.3zM1400.11 1320.3V1297.9h3.04V1320.3zM1402.35 1320.3V1309.1h1.92V1320.3zM1403.47 1320.3V1297.9h3.04V1320.3zM1405.72 1320.3V1309.1h1.92V1320.3zM1406.84 1320.3V1297.9h1.92V1320.3zM1407.96 1320.3V1309.1h1.92V1320.3zM1409.08 1320.3V1297.9h1.92V1320.3zM1410.20 1320.3V1309.1h1.92V1320.3zM1411.32 1320.3V1297.9h3.04V1320.3zM1413.56 1320.3V1309.1h1.92V1320.3zM1414.69 1320.3V1297.9h3.04V1320.3zM1416.93 1320.3V1309.1h1.92V1320.3zM1418.05 1320.3V1297.9h1.92V1320.3zM1419.17 1320.3V1309.1h1.92V1320.3zM1420.29 1320.3V1297.9h9.77V1320.3zM1429.26 1320.3V1286.6h3.04V1320.3zM1431.50 1320.3V1297.9h1.92V1320.3zM1432.62 1320.3V1286.6h3.04V1320.3zM1434.87 1320.3V1297.9h1.92V1320.3zM1435.99 1320.3V1286.6h5.28V1320.3zM1440.47 1320.3V1297.9h1.92V1320.3zM1441.59 1320.3V1286.6h3.04V1320.3zM1443.84 1320.3V1297.9h1.92V1320.3zM1444.96 1320.3V1286.6h4.16V1320.3zM1448.32 1320.3V1275.4h1.92V1320.3zM1449.44 1320.3V1286.6h3.04V1320.3zM1451.68 1320.3V1275.4h1.92V1320.3zM1452.81 1320.3V1286.6h1.92V1320.3zM1453.93 1320.3V1275.4h3.04V1320.3zM1456.17 1320.3V1286.6h1.92V1320.3zM1457.29 1320.3V1275.4h1.92V1320.3zM1458.41 1320.3V1286.6h3.04V1320.3zM1460.65 1320.3V1275.4h1.92V1320.3zM1461.78 1320.3V1286.6h3.04V1320.3zM1464.02 1320.3V1275.4h1.92V1320.3zM1465.14 1320.3V1286.6h1.92V1320.3zM1466.26 1320.3V1275.4h3.04V1320.3zM1468.50 1320.3V1286.6h1.92V1320.3zM1469.62 1320.3V1275.4h1.92V1320.3zM1470.74 1320.3V1286.6h3.04V1320.3zM1472.99 1320.3V1275.4h1.92V1320.3zM1474.11 1320.3V1286.6h3.04V1320.3zM1476.35 1320.3V1275.4h1.92V1320.3zM1477.47 1320.3V1286.6h1.92V1320.3zM1478.59 1320.3V1275.4h3.04V1320.3zM1480.84 1320.3V1286.6h1.92V1320.3zM1481.96 1320.3V1275.4h1.92V1320.3zM1483.08 1320.3V1286.6h3.04V1320.3zM1485.32 1320.3V1275.4h1.92V1320.3zM1486.44 1320.3V1286.6h3.04V1320.3zM1488.68 1320.3V1275.4h1.92V1320.3zM1489.80 1320.3V1286.6h1.92V1320.3zM1490.93 1320.3V1275.4h3.04V1320.3zM1493.17 1320.3V1286.6h1.92V1320.3zM1494.29 1320.3V1275.4h1.92V1320.3zM1495.41 1320.3V1286.6h3.04V1320.3zM1497.65 1320.3V1275.4h1.92V1320.3zM1498.77 1320.3V1286.6h3.04V1320.3zM1501.02 1320.3V1275.4h1.92V1320.3zM1502.14 1320.3V1264.2h1.92V1320.3zM1503.26 1320.3V1275.4h3.04V1320.3zM1505.50 1320.3V1286.6h1.92V1320.3zM1506.62 1320.3V1275.4h1.92V1320.3zM1507.74 1320.3V1286.6h3.04V1320.3zM1509.99 1320.3V1275.4h1.92V1320.3zM1511.11 1320.3V1286.6h3.04V1320.3zM1513.35 1320.3V1275.4h1.92V1320.3zM1514.47 1320.3V1286.6h1.92V1320.3zM1515.59 1320.3V1275.4h3.04V1320.3zM1517.83 1320.3V1286.6h1.92V1320.3zM1518.96 1320.3V1275.4h1.92V1320.3zM1520.08 1320.3V1286.6h3.04V1320.3zM1522.32 1320.3V1275.4h1.92V1320.3zM1523.44 1320.3V1286.6h1.92V1320.3zM1524.56 1320.3V1264.2h1.92V1320.3zM1525.68 1320.3V1275.4h1.92V1320.3zM1526.80 1320.3V1286.6h1.92V1320.3zM1527.92 1320.3V1275.4h3.04V1320.3zM1530.17 1320.3V1286.6h1.92V1320.3zM1531.29 1320.3V1275.4h1.92V1320.3zM1532.41 1320.3V1286.6h3.04V1320.3zM1534.65 1320.3V1275.4h1.92V1320.3zM1535.77 1320.3V1286.6h3.04V1320.3zM1538.02 1320.3V1275.4h1.92V1320.3zM1539.14 1320.3V1286.6h1.92V1320.3zM1540.26 1320.3V1275.4h3.04V1320.3zM1542.50 1320.3V1286.6h1.92V1320.3zM1543.62 1320.3V1275.4h1.92V1320.3zM1544.74 1320.3V1286.6h3.04V1320.3zM1546.99 1320.3V1275.4h1.92V1320.3zM1548.11 1320.3V1286.6h3.04V1320.3zM1550.35 1320.3V1275.4h1.92V1320.3zM1551.47 1320.3V1286.6h1.92V1320.3zM1552.59 1320.3V1275.4h3.04V1320.3zM1554.83 1320.3V1286.6h1.92V1320.3zM1555.95 1320.3V1275.4h1.92V1320.3zM1557.08 1320.3V1286.6h3.04V1320.3zM1559.32 1320.3V1275.4h1.92V1320.3zM1560.44 1320.3V1286.6h3.04V1320.3zM1562.68 1320.3V1275.4h1.92V1320.3zM1563.80 1320.3V1286.6h1.92V1320.3zM1564.92 1320.3V1275.4h1.92V1320.3zM1566.05 1320.3V1286.6h4.16V1320.3zM1569.41 1320.3V1297.9h1.92V1320.3zM1570.53 1320.3V1286.6h3.04V1320.3zM1572.77 1320.3V1297.9h1.92V1320.3zM1573.89 1320.3V1286.6h1.92V1320.3zM1575.01 1320.3V1297.9h1.92V1320.3zM1576.14 1320.3V1286.6h3.04V1320.3zM1578.38 1320.3V1297.9h1.92V1320.3zM1579.50 1320.3V1286.6h1.92V1320.3zM1580.62 1320.3V1297.9h1.92V1320.3zM1581.74 1320.3V1286.6h3.04V1320.3zM1583.98 1320.3V1297.9h1.92V1320.3zM1585.11 1320.3V1286.6h18.74V1320.3zM1603.04 1320.3V1297.9h1.92V1320.3zM1604.17 1320.3V1286.6h3.04V1320.3zM1606.41 1320.3V1297.9h1.92V1320.3zM1607.53 1320.3V1286.6h3.04V1320.3zM1609.77 1320.3V1297.9h1.92V1320.3zM1610.89 1320.3V1286.6h1.92V1320.3zM1612.01 1320.3V1275.4h1.92V1320.3zM1613.13 1320.3V1286.6h1.92V1320.3zM1614.26 1320.3V1297.9h6.41V1320.3zM1619.86 1320.3V1286.6h1.92V1320.3zM1620.98 1320.3V1297.9h8.65V1320.3zM1628.83 1320.3V1286.6h1.92V1320.3zM1629.95 1320.3V1309.1h1.92V1320.3zM1631.07 1320.3V1297.9h4.16V1320.3zM1634.44 1320.3V1309.1h1.92V1320.3zM1635.56 1320.3V1297.9h15.38V1320.3zM1650.13 1320.3V1286.6h1.92V1320.3zM1651.25 1320.3V1297.9h5.28V1320.3zM1655.74 1320.3V1309.1h1.92V1320.3zM1656.86 1320.3V1297.9h4.16V1320.3zM1660.22 1320.3V1309.1h1.92V1320.3zM1661.35 1320.3V1297.9h3.04V1320.3zM1663.59 1320.3V1286.6h1.92V1320.3zM1664.71 1320.3V1309.1h1.92V1320.3zM1665.83 1320.3V1297.9h4.16V1320.3zM1669.19 1320.3V1309.1h1.92V1320.3zM1670.31 1320.3V1297.9h4.16V1320.3zM1673.68 1320.3V1309.1h1.92V1320.3zM1674.80 1320.3V1297.9h4.16V1320.3zM1678.16 1320.3V1309.1h1.92V1320.3zM1679.28 1320.3V1297.9h4.16V1320.3zM1682.65 1320.3V1309.1h1.92V1320.3zM1683.77 1320.3V1286.6h1.92V1320.3zM1684.89 1320.3V1297.9h3.04V1320.3zM1687.13 1320.3V1309.1h1.92V1320.3zM1688.25 1320.3V1297.9h9.77V1320.3zM1697.22 1320.3V1286.6h3.04V1320.3zM1699.47 1320.3V1297.9h1.92V1320.3zM1700.59 1320.3V1286.6h10.89V1320.3zM1710.68 1320.3V1275.4h13.13V1320.3zM1723.01 1320.3V1264.2h1.92V1320.3zM1724.13 1320.3V1275.4h1.92V1320.3zM1725.25 1320.3V1264.2h3.04V1320.3zM1727.50 1320.3V1275.4h1.92V1320.3zM1728.62 1320.3V1264.2h1.92V1320.3zM1729.74 1320.3V1275.4h1.92V1320.3zM1730.86 1320.3V1264.2h1.92V1320.3zM1731.98 1320.3V1275.4h1.92V1320.3zM1733.10 1320.3V1264.2h3.04V1320.3zM1735.34 1320.3V1275.4h1.92V1320.3zM1736.46 1320.3V1264.2h1.92V1320.3zM1737.59 1320.3V1275.4h1.92V1320.3zM1738.71 1320.3V1264.2h1.92V1320.3zM1739.83 1320.3V1275.4h1.92V1320.3zM1740.95 1320.3V1264.2h3.04V1320.3zM1743.19 1320.3V1275.4h1.92V1320.3zM1744.31 1320.3V1264.2h1.92V1320.3zM1745.43 1320.3V1275.4h1.92V1320.3zM1746.56 1320.3V1264.2h1.92V1320.3zM1747.68 1320.3V1275.4h1.92V1320.3zM1748.80 1320.3V1264.2h3.04V1320.3zM1751.04 1320.3V1275.4h1.92V1320.3zM1752.16 1320.3V1264.2h1.92V1320.3zM1753.28 1320.3V1275.4h1.92V1320.3zM1754.40 1320.3V1264.2h5.28V1320.3zM1758.89 1320.3V1241.7h1.92V1320.3zM1760.01 1320.3V1253.0h13.13V1320.3zM1772.34 1320.3V1264.2h1.92V1320.3zM1773.46 1320.3V1241.7h1.92V1320.3zM1774.58 1320.3V1264.2h1.92V1320.3zM1775.71 1320.3V1253.0h3.04V1320.3zM1777.95 1320.3V1264.2h1.92V1320.3zM1779.07 1320.3V1253.0h3.04V1320.3zM1781.31 1320.3V1264.2h1.92V1320.3zM1782.43 1320.3V1253.0h3.04V1320.3zM1784.68 1320.3V1264.2h1.92V1320.3zM1785.80 1320.3V1253.0h1.92V1320.3zM1786.92 1320.3V1264.2h1.92V1320.3zM1788.04 1320.3V1241.7h1.92V1320.3zM1789.16 1320.3V1253.0h1.92V1320.3zM1790.28 1320.3V1264.2h1.92V1320.3zM1791.40 1320.3V1253.0h3.04V1320.3zM1793.64 1320.3V1264.2h1.92V1320.3zM1794.77 1320.3V1253.0h3.04V1320.3zM1797.01 1320.3V1264.2h1.92V1320.3zM1798.13 1320.3V1253.0h1.92V1320.3zM1799.25 1320.3V1264.2h1.92V1320.3zM1800.37 1320.3V1253.0h3.04V1320.3zM1802.61 1320.3V1241.7h1.92V1320.3zM1803.74 1320.3V1253.0h3.04V1320.3zM1805.98 1320.3V1264.2h1.92V1320.3zM1807.10 1320.3V1253.0h3.04V1320.3zM1809.34 1320.3V1264.2h1.92V1320.3zM1810.46 1320.3V1253.0h1.92V1320.3zM1811.58 1320.3V1264.2h1.92V1320.3zM1812.70 1320.3V1253.0h3.04V1320.3zM1814.95 1320.3V1264.2h1.92V1320.3zM1816.07 1320.3V1253.0h1.92V1320.3zM1817.19 1320.3V1241.7h1.92V1320.3zM1818.31 1320.3V1264.2h1.92V1320.3zM1819.43 1320.3V1253.0h3.04V1320.3zM1821.67 1320.3V1264.2h1.92V1320.3zM1822.80 1320.3V1253.0h1.92V1320.3zM1823.92 1320.3V1264.2h1.92V1320.3zM1825.04 1320.3V1253.0h3.04V1320.3zM1827.28 1320.3V1264.2h1.92V1320.3zM1828.40 1320.3V1253.0h3.04V1320.3zM1830.64 1320.3V1241.7h1.92V1320.3zM1831.76 1320.3V1253.0h3.04V1320.3zM1834.01 1320.3V1264.2h1.92V1320.3zM1835.13 1320.3V1253.0h1.92V1320.3zM1836.25 1320.3V1264.2h1.92V1320.3zM1837.37 1320.3V1253.0h3.04V1320.3zM1839.61 1320.3V1264.2h1.92V1320.3zM1840.73 1320.3V1253.0h3.04V1320.3zM1842.98 1320.3V1264.2h1.92V1320.3zM1844.10 1320.3V1253.0h1.92V1320.3zM1845.22 1320.3V1241.7h1.92V1320.3zM1846.34 1320.3V1264.2h1.92V1320.3zM1847.46 1320.3V1253.0h1.92V1320.3zM1848.58 1320.3V1264.2h1.92V1320.3zM1849.70 1320.3V1253.0h3.04V1320.3zM1851.95 1320.3V1264.2h1.92V1320.3zM1853.07 1320.3V1253.0h3.04V1320.3zM1855.31 1320.3V1264.2h1.92V1320.3zM1856.43 1320.3V1253.0h3.04V1320.3zM1858.67 1320.3V1264.2h1.92V1320.3zM1859.79 1320.3V1241.7h1.92V1320.3zM1860.92 1320.3V1264.2h1.92V1320.3zM1862.04 1320.3V1253.0h3.04V1320.3zM1864.28 1320.3V1264.2h1.92V1320.3zM1865.40 1320.3V1253.0h3.04V1320.3zM1867.64 1320.3V1264.2h1.92V1320.3zM1868.76 1320.3V1253.0h3.04V1320.3zM1871.01 1320.3V1264.2h1.92V1320.3zM1872.13 1320.3V1253.0h1.92V1320.3zM1873.25 1320.3V1264.2h1.92V1320.3zM1874.37 1320.3V1241.7h1.92V1320.3zM1875.49 1320.3V1253.0h1.92V1320.3zM1876.61 1320.3V1264.2h1.92V1320.3zM1877.73 1320.3V1253.0h3.04V1320.3zM1879.98 1320.3V1264.2h1.92V1320.3zM1881.10 1320.3V1253.0h3.04V1320.3zM1883.34 1320.3V1264.2h1.92V1320.3zM1884.46 1320.3V1253.0h1.92V1320.3zM1885.58 1320.3V1264.2h1.92V1320.3zM1886.70 1320.3V1253.0h3.04V1320.3zM1888.95 1320.3V1264.2h1.92V1320.3zM1890.07 1320.3V1253.0h3.04V1320.3zM1892.31 1320.3V1264.2h1.92V1320.3zM1893.43 1320.3V1253.0h3.04V1320.3zM1895.67 1320.3V1264.2h1.92V1320.3zM1896.79 1320.3V1253.0h1.92V1320.3zM1897.91 1320.3V1264.2h1.92V1320.3zM1899.04 1320.3V1253.0h3.04V1320.3zM1901.28 1320.3V1264.2h1.92V1320.3zM1902.40 1320.3V1253.0h3.04V1320.3zM1904.64 1320.3V1264.2h1.92V1320.3zM1905.76 1320.3V1253.0h3.04V1320.3zM1908.01 1320.3V1264.2h1.92V1320.3zM1909.13 1320.3V1253.0h1.92V1320.3zM1910.25 1320.3V1264.2h8.65V1320.3zM1918.10 1320.3V1253.0h3.04V1320.3zM1920.34 1320.3V1264.2h3.04V1320.3zM1922.58 1320.3V1275.4h1.92V1320.3zM1923.70 1320.3V1264.2h1.92V1320.3zM1924.82 1320.3V1275.4h1.92V1320.3zM1925.94 1320.3V1264.2h4.16V1320.3zM1929.31 1320.3V1275.4h1.92V1320.3zM1930.43 1320.3V1264.2h1.92V1320.3zM1931.55 1320.3V1275.4h1.92V1320.3zM1932.67 1320.3V1264.2h1.92V1320.3zM1933.79 1320.3V1275.4h9.77V1320.3zM1942.76 1320.3V1286.6h6.41V1320.3zM1948.37 1320.3V1275.4h4.16V1320.3zM1951.73 1320.3V1286.6h3.04V1320.3zM1953.97 1320.3V1297.9h1.92V1320.3zM1955.09 1320.3V1286.6h1.92V1320.3zM1956.22 1320.3V1297.9h1.92V1320.3zM1957.34 1320.3V1286.6h3.04V1320.3zM1959.58 1320.3V1297.9h1.92V1320.3zM1960.70 1320.3V1275.4h6.41V1320.3zM1966.31 1320.3V1286.6h6.41V1320.3zM1971.91 1320.3V1275.4h3.04V1320.3zM1974.15 1320.3V1286.6h1.92V1320.3zM1975.28 1320.3V1275.4h1.92V1320.3zM1976.40 1320.3V1286.6h1.92V1320.3zM1977.52 1320.3V1275.4h5.28V1320.3zM1982.00 1320.3V1264.2h3.04V1320.3zM1984.25 1320.3V1275.4h13.13V1320.3zM1996.58 1320.3V1264.2h1.92V1320.3zM1997.70 1320.3V1275.4h1.92V1320.3zM1998.82 1320.3V1264.2h3.04V1320.3zM2001.06 1320.3V1275.4h1.92V1320.3zM2002.18 1320.3V1264.2h4.16V1320.3zM2005.55 1320.3V1253.0h4.16V1320.3zM2008.91 1320.3V1264.2h3.04V1320.3zM2011.15 1320.3V1253.0h3.04V1320.3zM2013.40 1320.3V1264.2h6.41V1320.3zM2019.00 1320.3V1253.0h1.92V1320.3zM2020.12 1320.3V1264.2h1.92V1320.3zM2021.24 1320.3V1253.0h3.04V1320.3zM2023.49 1320.3V1264.2h1.92V1320.3zM2024.61 1320.3V1253.0h4.16V1320.3zM2027.97 1320.3V1264.2h1.92V1320.3zM2029.09 1320.3V1253.0h3.04V1320.3zM2031.34 1320.3V1264.2h1.92V1320.3zM2032.46 1320.3V1253.0h3.04V1320.3zM2034.70 1320.3V1264.2h1.92V1320.3zM2035.82 1320.3V1253.0h4.16V1320.3zM2039.18 1320.3V1264.2h1.92V1320.3zM2040.30 1320.3V1253.0h3.04V1320.3zM2042.55 1320.3V1264.2h1.92V1320.3zM2043.67 1320.3V1253.0h3.04V1320.3zM2045.91 1320.3V1264.2h1.92V1320.3zM2047.03 1320.3V1253.0h4.16V1320.3zM2050.40 1320.3V1264.2h1.92V1320.3zM2051.52 1320.3V1253.0h8.65V1320.3zM2059.36 1320.3V1241.7h1.92V1320.3zM2060.49 1320.3V1253.0h10.89V1320.3zM2070.58 1320.3V1241.7h1.92V1320.3zM2071.70 1320.3V1253.0h12.01V1320.3zM2082.91 1320.3V1241.7h1.92V1320.3zM2084.03 1320.3V1253.0h1.92V1320.3zM2085.15 1320.3V1241.7h1.92V1320.3zM2086.27 1320.3V1253.0h5.28V1320.3zM2090.76 1320.3V1241.7h1.92V1320.3zM2091.88 1320.3V1253.0h8.65V1320.3zM2099.73 1320.3V1241.7h1.92V1320.3zM2100.85 1320.3V1253.0h6.41V1320.3zM2106.45 1320.3V1264.2h1.92V1320.3zM2107.58 1320.3V1253.0h5.28V1320.3zM2112.06 1320.3V1264.2h1.92V1320.3zM2113.18 1320.3V1253.0h1.92V1320.3zM2114.30 1320.3V1241.7h1.92V1320.3zM2115.42 1320.3V1253.0h3.04V1320.3zM2117.67 1320.3V1264.2h1.92V1320.3zM2118.79 1320.3V1253.0h5.28V1320.3zM2123.27 1320.3V1264.2h1.92V1320.3zM2124.39 1320.3V1253.0h3.04V1320.3zM2126.64 1320.3V1264.2h1.92V1320.3zM2127.76 1320.3V1253.0h5.28V1320.3zM2132.24 1320.3V1264.2h1.92V1320.3zM2133.36 1320.3V1253.0h3.04V1320.3zM2135.60 1320.3V1264.2h1.92V1320.3zM2136.73 1320.3V1253.0h3.04V1320.3zM2138.97 1320.3V1264.2h1.92V1320.3zM2140.09 1320.3V1253.0h6.41V1320.3zM2145.70 1320.3V1264.2h1.92V1320.3zM2146.82 1320.3V1253.0h3.04V1320.3zM2149.06 1320.3V1264.2h1.92V1320.3zM2150.18 1320.3V1253.0h1.92V1320.3zM2151.30 1320.3V1264.2h1.92V1320.3zM2152.42 1320.3V1253.0h4.16V1320.3zM2155.79 1320.3V1264.2h1.92V1320.3zM2156.91 1320.3V1253.0h7.53V1320.3zM2163.63 1320.3V1264.2h1.92V1320.3zM2164.76 1320.3V1253.0h3.04V1320.3zM2167.00 1320.3V1264.2h1.92V1320.3zM2168.12 1320.3V1253.0h3.04V1320.3zM2170.36 1320.3V1264.2h1.92V1320.3zM2171.48 1320.3V1253.0h1.92V1320.3zM2172.60 1320.3V1264.2h1.92V1320.3zM2321.72 1320.3V1297.9h4.16V1320.3zM2325.08 1320.3V1309.1h1.92V1320.3zM2326.21 1320.3V1297.9h3.04V1320.3zM2328.45 1320.3V1309.1h1.92V1320.3zM2329.57 1320.3V1297.9h3.04V1320.3zM2331.81 1320.3V1309.1h1.92V1320.3zM2332.93 1320.3V1297.9h4.16V1320.3zM2336.30 1320.3V1309.1h1.92V1320.3zM2337.42 1320.3V1297.9h6.41V1320.3zM2343.02 1320.3V1309.1h1.92V1320.3zM2344.14 1320.3V1297.9h1.92V1320.3zM2345.27 1320.3V1309.1h1.92V1320.3zM2346.39 1320.3V1297.9h1.92V1320.3zM2347.51 1320.3V1309.1h1.92V1320.3zM2348.63 1320.3V1297.9h3.04V1320.3zM2350.87 1320.3V1309.1h1.92V1320.3zM2351.99 1320.3V1297.9h4.16V1320.3zM2355.36 1320.3V1309.1h1.92V1320.3zM2356.48 1320.3V1297.9h5.28V1320.3zM2360.96 1320.3V1286.6h1.92V1320.3zM2362.08 1320.3V1297.9h3.04V1320.3zM2364.33 1320.3V1286.6h1.92V1320.3zM2365.45 1320.3V1297.9h5.28V1320.3zM2369.93 1320.3V1286.6h3.04V1320.3zM2372.17 1320.3V1297.9h1.92V1320.3zM2373.30 1320.3V1286.6h4.16V1320.3zM2376.66 1320.3V1297.9h1.92V1320.3zM2377.78 1320.3V1286.6h1.92V1320.3zM2378.90 1320.3V1275.4h3.04V1320.3zM2381.14 1320.3V1286.6h3.04V1320.3zM2383.39 1320.3V1275.4h1.92V1320.3zM2384.51 1320.3V1286.6h1.92V1320.3zM2385.63 1320.3V1275.4h1.92V1320.3zM2386.75 1320.3V1286.6h1.92V1320.3zM2387.87 1320.3V1275.4h1.92V1320.3zM2388.99 1320.3V1286.6h1.92V1320.3zM2390.11 1320.3V1275.4h3.04V1320.3zM2392.36 1320.3V1286.6h1.92V1320.3zM2393.48 1320.3V1275.4h4.16V1320.3zM2396.84 1320.3V1264.2h1.92V1320.3zM2397.96 1320.3V1275.4h4.16V1320.3zM2401.32 1320.3V1264.2h1.92V1320.3zM2402.45 1320.3V1275.4h3.04V1320.3zM2404.69 1320.3V1264.2h1.92V1320.3zM2405.81 1320.3V1275.4h3.04V1320.3zM2408.05 1320.3V1264.2h1.92V1320.3zM2409.17 1320.3V1275.4h1.92V1320.3zM2410.29 1320.3V1264.2h1.92V1320.3zM2411.42 1320.3V1275.4h1.92V1320.3zM2412.54 1320.3V1253.0h1.92V1320.3zM2413.66 1320.3V1275.4h1.92V1320.3z" fill="#a0edc4"/><path d="M236.32 1320.3V1253.0h3.04V1320.3zM238.57 1320.3V1264.2h3.04V1320.3zM240.81 1320.3V1275.4h1.92V1320.3zM241.93 1320.3V1264.2h3.04V1320.3zM244.17 1320.3V1275.4h1.92V1320.3zM245.29 1320.3V1264.2h1.92V1320.3zM246.42 1320.3V1253.0h1.92V1320.3zM247.54 1320.3V1275.4h1.92V1320.3zM248.66 1320.3V1264.2h3.04V1320.3zM250.90 1320.3V1275.4h1.92V1320.3zM252.02 1320.3V1264.2h1.92V1320.3zM253.14 1320.3V1219.3h1.92V1320.3zM254.26 1320.3V1174.4h1.92V1320.3zM255.39 1320.3V1185.6h1.92V1320.3zM256.51 1320.3V1196.9h1.92V1320.3zM257.63 1320.3V1208.1h3.04V1320.3zM259.87 1320.3V1152.0h1.92V1320.3zM260.99 1320.3V1107.1h1.92V1320.3zM262.11 1320.3V1017.3h1.92V1320.3zM263.23 1320.3V1163.2h3.04V1320.3zM265.48 1320.3V1174.4h1.92V1320.3zM266.60 1320.3V1163.2h1.92V1320.3zM267.72 1320.3V1129.5h1.92V1320.3zM268.84 1320.3V1095.9h1.92V1320.3zM269.96 1320.3V905.1h1.92V1320.3zM271.08 1320.3V961.2h1.92V1320.3zM272.20 1320.3V1039.7h1.92V1320.3zM273.32 1320.3V1095.9h1.92V1320.3zM274.45 1320.3V1196.9h1.92V1320.3zM275.57 1320.3V1219.3h3.04V1320.3zM277.81 1320.3V1152.0h1.92V1320.3zM278.93 1320.3V1185.6h1.92V1320.3zM280.05 1320.3V1208.1h1.92V1320.3zM281.17 1320.3V1230.5h7.53V1320.3zM287.90 1320.3V1219.3h1.92V1320.3zM289.02 1320.3V1174.4h1.92V1320.3zM290.14 1320.3V1185.6h1.92V1320.3zM291.26 1320.3V1219.3h3.04V1320.3zM293.51 1320.3V1174.4h3.04V1320.3zM295.75 1320.3V1185.6h1.92V1320.3zM296.87 1320.3V1196.9h1.92V1320.3zM297.99 1320.3V1163.2h7.53V1320.3zM304.72 1320.3V1095.9h1.92V1320.3zM305.84 1320.3V972.4h1.92V1320.3zM306.96 1320.3V1006.1h1.92V1320.3zM308.08 1320.3V1219.3h3.04V1320.3zM310.32 1320.3V1152.0h1.92V1320.3zM311.44 1320.3V1196.9h5.28V1320.3zM315.93 1320.3V1152.0h1.92V1320.3zM317.05 1320.3V950.0h1.92V1320.3zM318.17 1320.3V1219.3h3.04V1320.3zM320.41 1320.3V1241.7h1.92V1320.3zM321.53 1320.3V1084.6h1.92V1320.3zM322.66 1320.3V1152.0h1.92V1320.3zM323.78 1320.3V1286.6h3.04V1320.3zM326.02 1320.3V1297.9h6.41V1320.3zM331.63 1320.3V1241.7h4.16V1320.3zM334.99 1320.3V1253.0h3.04V1320.3zM337.23 1320.3V1297.9h1.92V1320.3zM338.35 1320.3V1286.6h3.04V1320.3zM340.59 1320.3V1219.3h1.92V1320.3zM341.72 1320.3V1129.5h1.92V1320.3zM342.84 1320.3V1073.4h1.92V1320.3zM343.96 1320.3V1051.0h1.92V1320.3zM345.08 1320.3V1039.7h1.92V1320.3zM346.20 1320.3V1006.1h1.92V1320.3zM347.32 1320.3V1095.9h1.92V1320.3zM348.44 1320.3V1107.1h3.04V1320.3zM350.69 1320.3V1017.3h1.92V1320.3zM351.81 1320.3V1107.1h1.92V1320.3zM352.93 1320.3V1241.7h3.04V1320.3zM355.17 1320.3V1230.5h1.92V1320.3zM356.29 1320.3V1163.2h3.04V1320.3zM358.53 1320.3V1129.5h1.92V1320.3zM359.65 1320.3V1028.5h1.92V1320.3zM360.78 1320.3V1051.0h1.92V1320.3zM361.90 1320.3V1073.4h1.92V1320.3zM363.02 1320.3V1006.1h1.92V1320.3zM364.14 1320.3V1174.4h3.04V1320.3zM366.38 1320.3V1230.5h1.92V1320.3zM367.50 1320.3V1253.0h3.04V1320.3zM369.75 1320.3V1185.6h1.92V1320.3zM370.87 1320.3V1140.7h1.92V1320.3zM371.99 1320.3V1095.9h1.92V1320.3zM373.11 1320.3V1152.0h3.04V1320.3zM375.35 1320.3V1196.9h1.92V1320.3zM376.47 1320.3V1208.1h1.92V1320.3zM377.59 1320.3V1152.0h1.92V1320.3zM378.71 1320.3V1174.4h3.04V1320.3zM380.96 1320.3V1208.1h3.04V1320.3zM383.20 1320.3V1230.5h1.92V1320.3zM559.23 1320.3V1264.2h5.28V1320.3zM563.71 1320.3V1253.0h1.92V1320.3zM564.83 1320.3V1241.7h1.92V1320.3zM565.95 1320.3V1230.5h1.92V1320.3zM567.07 1320.3V1264.2h3.04V1320.3zM569.32 1320.3V1241.7h3.04V1320.3zM571.56 1320.3V1230.5h4.16V1320.3zM574.92 1320.3V1208.1h1.92V1320.3zM576.04 1320.3V1118.3h3.04V1320.3zM578.29 1320.3V1253.0h3.04V1320.3zM580.53 1320.3V1264.2h1.92V1320.3zM581.65 1320.3V1230.5h1.92V1320.3zM582.77 1320.3V1095.9h1.92V1320.3zM583.89 1320.3V994.9h1.92V1320.3zM585.01 1320.3V1118.3h1.92V1320.3zM586.13 1320.3V1129.5h3.04V1320.3zM588.38 1320.3V983.6h1.92V1320.3zM589.50 1320.3V994.9h1.92V1320.3zM590.62 1320.3V1039.7h1.92V1320.3zM591.74 1320.3V1073.4h1.92V1320.3zM592.86 1320.3V1152.0h1.92V1320.3zM593.98 1320.3V1163.2h1.92V1320.3zM595.10 1320.3V1219.3h3.04V1320.3zM597.35 1320.3V1152.0h1.92V1320.3zM598.47 1320.3V1185.6h1.92V1320.3zM599.59 1320.3V1219.3h3.04V1320.3zM601.83 1320.3V1230.5h3.04V1320.3zM604.07 1320.3V1241.7h4.16V1320.3zM607.44 1320.3V1163.2h1.92V1320.3zM608.56 1320.3V1185.6h3.04V1320.3zM610.80 1320.3V1208.1h3.04V1320.3zM613.04 1320.3V1118.3h3.04V1320.3zM615.28 1320.3V1185.6h3.04V1320.3zM617.53 1320.3V1196.9h1.92V1320.3zM618.65 1320.3V1219.3h1.92V1320.3zM619.77 1320.3V1241.7h1.92V1320.3zM620.89 1320.3V1253.0h3.04V1320.3zM623.13 1320.3V1241.7h3.04V1320.3zM625.37 1320.3V1230.5h1.92V1320.3zM626.50 1320.3V1152.0h1.92V1320.3zM627.62 1320.3V1140.7h3.04V1320.3zM629.86 1320.3V1241.7h1.92V1320.3zM630.98 1320.3V1253.0h1.92V1320.3zM632.10 1320.3V1241.7h1.92V1320.3zM633.22 1320.3V1253.0h1.92V1320.3zM634.34 1320.3V1241.7h1.92V1320.3zM635.47 1320.3V1253.0h1.92V1320.3zM636.59 1320.3V1185.6h3.04V1320.3zM638.83 1320.3V1163.2h1.92V1320.3zM639.95 1320.3V1208.1h1.92V1320.3zM641.07 1320.3V1241.7h3.04V1320.3zM643.31 1320.3V1253.0h6.41V1320.3zM648.92 1320.3V1185.6h1.92V1320.3zM650.04 1320.3V1208.1h3.04V1320.3zM652.28 1320.3V1219.3h1.92V1320.3zM653.40 1320.3V1241.7h1.92V1320.3zM654.53 1320.3V1253.0h4.16V1320.3zM657.89 1320.3V1241.7h1.92V1320.3zM659.01 1320.3V1196.9h3.04V1320.3zM661.25 1320.3V1208.1h3.04V1320.3zM663.49 1320.3V1253.0h6.41V1320.3zM669.10 1320.3V1208.1h1.92V1320.3zM670.22 1320.3V1185.6h1.92V1320.3zM671.34 1320.3V1051.0h1.92V1320.3zM672.46 1320.3V972.4h1.92V1320.3zM673.59 1320.3V1017.3h3.04V1320.3zM675.83 1320.3V1062.2h1.92V1320.3zM676.95 1320.3V1051.0h3.04V1320.3zM679.19 1320.3V1006.1h1.92V1320.3zM680.31 1320.3V1062.2h3.04V1320.3zM682.55 1320.3V1241.7h1.92V1320.3zM683.68 1320.3V1253.0h1.92V1320.3zM684.80 1320.3V1241.7h1.92V1320.3zM685.92 1320.3V1253.0h5.28V1320.3zM690.40 1320.3V1174.4h5.28V1320.3zM694.89 1320.3V1208.1h1.92V1320.3zM696.01 1320.3V1219.3h1.92V1320.3zM697.13 1320.3V1208.1h3.04V1320.3zM699.37 1320.3V1185.6h3.04V1320.3zM701.61 1320.3V1174.4h1.92V1320.3zM702.74 1320.3V1208.1h1.92V1320.3zM703.86 1320.3V1241.7h1.92V1320.3zM704.98 1320.3V1264.2h3.04V1320.3zM882.12 1320.3V1264.2h1.92V1320.3zM883.25 1320.3V1275.4h1.92V1320.3zM884.37 1320.3V1264.2h3.04V1320.3zM886.61 1320.3V1275.4h1.92V1320.3zM887.73 1320.3V1264.2h1.92V1320.3zM888.85 1320.3V1275.4h1.92V1320.3zM889.97 1320.3V1264.2h1.92V1320.3zM891.09 1320.3V1275.4h1.92V1320.3zM892.22 1320.3V1264.2h3.04V1320.3zM894.46 1320.3V1275.4h1.92V1320.3zM895.58 1320.3V1264.2h1.92V1320.3zM896.70 1320.3V1129.5h3.04V1320.3zM898.94 1320.3V1174.4h1.92V1320.3zM900.06 1320.3V1185.6h1.92V1320.3zM901.19 1320.3V1219.3h1.92V1320.3zM902.31 1320.3V1039.7h3.04V1320.3zM904.55 1320.3V961.2h1.92V1320.3zM905.67 1320.3V1095.9h3.04V1320.3zM907.91 1320.3V1039.7h3.04V1320.3zM910.15 1320.3V871.4h1.92V1320.3zM911.28 1320.3V938.7h1.92V1320.3zM912.40 1320.3V1084.6h3.04V1320.3zM914.64 1320.3V1017.3h1.92V1320.3zM915.76 1320.3V1095.9h1.92V1320.3zM916.88 1320.3V1140.7h3.04V1320.3zM919.12 1320.3V1230.5h3.04V1320.3zM921.37 1320.3V1163.2h3.04V1320.3zM923.61 1320.3V1196.9h1.92V1320.3zM924.73 1320.3V1219.3h1.92V1320.3zM925.85 1320.3V1241.7h3.04V1320.3zM928.09 1320.3V1163.2h3.04V1320.3zM930.34 1320.3V1129.5h1.92V1320.3zM931.46 1320.3V1196.9h3.04V1320.3zM933.70 1320.3V1185.6h1.92V1320.3zM934.82 1320.3V1129.5h1.92V1320.3zM935.94 1320.3V1107.1h1.92V1320.3zM937.06 1320.3V1051.0h1.92V1320.3zM938.18 1320.3V1129.5h1.92V1320.3zM939.31 1320.3V1095.9h1.92V1320.3zM940.43 1320.3V1039.7h1.92V1320.3zM941.55 1320.3V1241.7h1.92V1320.3zM942.67 1320.3V1253.0h3.04V1320.3zM944.91 1320.3V1230.5h1.92V1320.3zM946.03 1320.3V1163.2h1.92V1320.3zM947.15 1320.3V1140.7h1.92V1320.3zM948.27 1320.3V1219.3h1.92V1320.3zM949.40 1320.3V1241.7h1.92V1320.3zM950.52 1320.3V1253.0h3.04V1320.3zM952.76 1320.3V1241.7h1.92V1320.3zM953.88 1320.3V1208.1h1.92V1320.3zM955.00 1320.3V1152.0h3.04V1320.3zM957.24 1320.3V1174.4h1.92V1320.3zM958.37 1320.3V1196.9h3.04V1320.3zM960.61 1320.3V1208.1h1.92V1320.3zM961.73 1320.3V1084.6h3.04V1320.3zM963.97 1320.3V1118.3h1.92V1320.3zM965.09 1320.3V1208.1h3.04V1320.3zM967.33 1320.3V1241.7h4.16V1320.3zM970.70 1320.3V1253.0h3.04V1320.3zM972.94 1320.3V1185.6h1.92V1320.3zM974.06 1320.3V1196.9h1.92V1320.3zM975.18 1320.3V1219.3h1.92V1320.3zM976.30 1320.3V1253.0h7.53V1320.3zM983.03 1320.3V1241.7h1.92V1320.3zM984.15 1320.3V1174.4h3.04V1320.3zM986.39 1320.3V1208.1h1.92V1320.3zM987.52 1320.3V1241.7h1.92V1320.3zM988.64 1320.3V1084.6h1.92V1320.3zM989.76 1320.3V1051.0h1.92V1320.3zM990.88 1320.3V983.6h1.92V1320.3zM992.00 1320.3V1152.0h3.04V1320.3zM994.24 1320.3V1230.5h1.92V1320.3zM995.36 1320.3V1241.7h3.04V1320.3zM997.61 1320.3V1253.0h1.92V1320.3zM998.73 1320.3V1219.3h1.92V1320.3zM999.85 1320.3V1140.7h3.04V1320.3zM1002.09 1320.3V1129.5h1.92V1320.3zM1003.21 1320.3V1174.4h1.92V1320.3zM1004.33 1320.3V1241.7h1.92V1320.3zM1005.45 1320.3V1208.1h1.92V1320.3zM1006.58 1320.3V1140.7h1.92V1320.3zM1007.70 1320.3V1185.6h1.92V1320.3zM1008.82 1320.3V1219.3h1.92V1320.3zM1009.94 1320.3V1253.0h3.04V1320.3zM1012.18 1320.3V1185.6h1.92V1320.3zM1013.30 1320.3V1152.0h1.92V1320.3zM1014.42 1320.3V1219.3h1.92V1320.3zM1015.55 1320.3V1241.7h1.92V1320.3zM1016.67 1320.3V1185.6h3.04V1320.3zM1018.91 1320.3V1253.0h1.92V1320.3zM1020.03 1320.3V1264.2h1.92V1320.3zM1021.15 1320.3V1275.4h1.92V1320.3zM1022.27 1320.3V1286.6h3.04V1320.3zM1024.51 1320.3V1297.9h1.92V1320.3zM1025.64 1320.3V1309.1h1.92V1320.3zM1026.76 1320.3V1297.9h1.92V1320.3zM1027.88 1320.3V1309.1h3.04V1320.3zM1205.02 1320.3V1286.6h6.41V1320.3zM1210.63 1320.3V1297.9h1.92V1320.3zM1211.75 1320.3V1286.6h4.16V1320.3zM1215.12 1320.3V1297.9h1.92V1320.3zM1216.24 1320.3V1286.6h4.16V1320.3zM1219.60 1320.3V1297.9h1.92V1320.3zM1220.72 1320.3V1275.4h1.92V1320.3zM1221.84 1320.3V1129.5h3.04V1320.3zM1224.09 1320.3V1140.7h1.92V1320.3zM1225.21 1320.3V1185.6h1.92V1320.3zM1226.33 1320.3V1196.9h1.92V1320.3zM1227.45 1320.3V1230.5h3.04V1320.3zM1229.69 1320.3V1185.6h3.04V1320.3zM1231.93 1320.3V1174.4h1.92V1320.3zM1233.05 1320.3V1163.2h1.92V1320.3zM1234.18 1320.3V1152.0h1.92V1320.3zM1235.30 1320.3V1095.9h1.92V1320.3zM1236.42 1320.3V1118.3h3.04V1320.3zM1238.66 1320.3V983.6h3.04V1320.3zM1240.90 1320.3V1028.5h1.92V1320.3zM1242.02 1320.3V1095.9h1.92V1320.3zM1243.15 1320.3V1219.3h1.92V1320.3zM1244.27 1320.3V1118.3h1.92V1320.3zM1245.39 1320.3V1196.9h3.04V1320.3zM1247.63 1320.3V1230.5h3.04V1320.3zM1249.87 1320.3V1174.4h1.92V1320.3zM1250.99 1320.3V1185.6h1.92V1320.3zM1252.11 1320.3V1219.3h1.92V1320.3zM1253.24 1320.3V1196.9h1.92V1320.3zM1254.36 1320.3V1185.6h3.04V1320.3zM1256.60 1320.3V1196.9h1.92V1320.3zM1257.72 1320.3V1230.5h3.04V1320.3zM1259.96 1320.3V1174.4h3.04V1320.3zM1262.21 1320.3V1095.9h1.92V1320.3zM1263.33 1320.3V1241.7h1.92V1320.3zM1264.45 1320.3V1208.1h1.92V1320.3zM1265.57 1320.3V1185.6h3.04V1320.3zM1267.81 1320.3V1163.2h1.92V1320.3zM1268.93 1320.3V1062.2h1.92V1320.3zM1270.05 1320.3V1163.2h3.04V1320.3zM1272.30 1320.3V1208.1h1.92V1320.3zM1273.42 1320.3V1241.7h1.92V1320.3zM1274.54 1320.3V1163.2h1.92V1320.3zM1275.66 1320.3V1196.9h4.16V1320.3zM1279.02 1320.3V1129.5h1.92V1320.3zM1280.14 1320.3V1152.0h1.92V1320.3zM1281.27 1320.3V1208.1h1.92V1320.3zM1282.39 1320.3V1286.6h3.04V1320.3zM1284.63 1320.3V1219.3h1.92V1320.3zM1285.75 1320.3V1253.0h1.92V1320.3zM1286.87 1320.3V1275.4h1.92V1320.3zM1287.99 1320.3V1297.9h1.92V1320.3zM1289.11 1320.3V1241.7h1.92V1320.3zM1290.23 1320.3V1140.7h1.92V1320.3zM1291.36 1320.3V1073.4h1.92V1320.3zM1292.48 1320.3V1264.2h3.04V1320.3zM1294.72 1320.3V1219.3h1.92V1320.3zM1295.84 1320.3V1253.0h1.92V1320.3zM1296.96 1320.3V1275.4h1.92V1320.3zM1298.08 1320.3V1297.9h1.92V1320.3zM1299.20 1320.3V1253.0h1.92V1320.3zM1300.33 1320.3V1241.7h1.92V1320.3zM1301.45 1320.3V1253.0h1.92V1320.3zM1302.57 1320.3V1286.6h1.92V1320.3zM1303.69 1320.3V1230.5h3.04V1320.3zM1305.93 1320.3V1241.7h1.92V1320.3zM1307.05 1320.3V1174.4h3.04V1320.3zM1309.29 1320.3V1196.9h1.92V1320.3zM1310.42 1320.3V1174.4h3.04V1320.3zM1312.66 1320.3V1241.7h1.92V1320.3zM1313.78 1320.3V1196.9h1.92V1320.3zM1314.90 1320.3V1163.2h1.92V1320.3zM1316.02 1320.3V1196.9h1.92V1320.3zM1317.14 1320.3V1208.1h3.04V1320.3zM1319.39 1320.3V1196.9h1.92V1320.3zM1320.51 1320.3V1185.6h1.92V1320.3zM1321.63 1320.3V1208.1h1.92V1320.3zM1322.75 1320.3V1241.7h1.92V1320.3zM1323.87 1320.3V1196.9h4.16V1320.3zM1327.23 1320.3V1219.3h1.92V1320.3zM1328.35 1320.3V1241.7h1.92V1320.3zM1329.48 1320.3V1174.4h3.04V1320.3zM1331.72 1320.3V1208.1h1.92V1320.3zM1332.84 1320.3V1230.5h1.92V1320.3zM1333.96 1320.3V1253.0h1.92V1320.3zM1335.08 1320.3V1140.7h1.92V1320.3zM1336.20 1320.3V1174.4h3.04V1320.3zM1338.45 1320.3V1241.7h3.04V1320.3zM1340.69 1320.3V1264.2h1.92V1320.3zM1341.81 1320.3V1297.9h1.92V1320.3zM1342.93 1320.3V1309.1h1.92V1320.3zM1344.05 1320.3V1297.9h3.04V1320.3zM1346.29 1320.3V1309.1h1.92V1320.3zM1347.41 1320.3V1297.9h3.04V1320.3zM1349.66 1320.3V1309.1h1.92V1320.3zM1350.78 1320.3V1297.9h3.04V1320.3zM2173.72 1320.3V1241.7h1.92V1320.3zM2174.85 1320.3V1253.0h1.92V1320.3zM2175.97 1320.3V1264.2h1.92V1320.3zM2177.09 1320.3V1253.0h3.04V1320.3zM2179.33 1320.3V1264.2h1.92V1320.3zM2180.45 1320.3V1253.0h3.04V1320.3zM2182.69 1320.3V1264.2h1.92V1320.3zM2183.82 1320.3V1253.0h4.16V1320.3zM2187.18 1320.3V1264.2h1.92V1320.3zM2188.30 1320.3V1253.0h3.04V1320.3zM2190.54 1320.3V1230.5h1.92V1320.3zM2191.66 1320.3V1163.2h1.92V1320.3zM2192.79 1320.3V1208.1h1.92V1320.3zM2193.91 1320.3V1241.7h1.92V1320.3zM2195.03 1320.3V1253.0h1.92V1320.3zM2196.15 1320.3V1174.4h1.92V1320.3zM2197.27 1320.3V1208.1h1.92V1320.3zM2198.39 1320.3V1241.7h3.04V1320.3zM2200.63 1320.3V1185.6h1.92V1320.3zM2201.75 1320.3V1208.1h1.92V1320.3zM2202.88 1320.3V1219.3h1.92V1320.3zM2204.00 1320.3V1241.7h1.92V1320.3zM2205.12 1320.3V1208.1h3.04V1320.3zM2207.36 1320.3V1196.9h1.92V1320.3zM2208.48 1320.3V1253.0h1.92V1320.3zM2209.60 1320.3V1219.3h1.92V1320.3zM2210.72 1320.3V1196.9h1.92V1320.3zM2211.85 1320.3V1208.1h1.92V1320.3zM2212.97 1320.3V1241.7h1.92V1320.3zM2214.09 1320.3V1253.0h1.92V1320.3zM2215.21 1320.3V1174.4h1.92V1320.3zM2216.33 1320.3V1208.1h1.92V1320.3zM2217.45 1320.3V1230.5h1.92V1320.3zM2218.57 1320.3V1253.0h6.41V1320.3zM2224.18 1320.3V1185.6h1.92V1320.3zM2225.30 1320.3V1208.1h1.92V1320.3zM2226.42 1320.3V1241.7h1.92V1320.3zM2227.54 1320.3V1253.0h1.92V1320.3zM2228.66 1320.3V1241.7h1.92V1320.3zM2229.78 1320.3V1264.2h1.92V1320.3zM2230.91 1320.3V1275.4h1.92V1320.3zM2232.03 1320.3V1264.2h1.92V1320.3zM2233.15 1320.3V1208.1h1.92V1320.3zM2234.27 1320.3V1230.5h1.92V1320.3zM2235.39 1320.3V1241.7h1.92V1320.3zM2236.51 1320.3V1286.6h1.92V1320.3zM2237.63 1320.3V1264.2h1.92V1320.3zM2238.75 1320.3V1241.7h3.04V1320.3zM2241.00 1320.3V1253.0h1.92V1320.3zM2242.12 1320.3V1230.5h1.92V1320.3zM2243.24 1320.3V1185.6h1.92V1320.3zM2244.36 1320.3V1219.3h1.92V1320.3zM2245.48 1320.3V1241.7h1.92V1320.3zM2246.60 1320.3V1253.0h1.92V1320.3zM2247.72 1320.3V1241.7h1.92V1320.3zM2248.84 1320.3V1264.2h1.92V1320.3zM2249.97 1320.3V1253.0h1.92V1320.3zM2251.09 1320.3V1264.2h1.92V1320.3zM2252.21 1320.3V1208.1h1.92V1320.3zM2253.33 1320.3V1230.5h1.92V1320.3zM2254.45 1320.3V1253.0h1.92V1320.3zM2255.57 1320.3V1264.2h3.04V1320.3zM2257.81 1320.3V1286.6h1.92V1320.3zM2258.93 1320.3V1275.4h1.92V1320.3zM2260.06 1320.3V1286.6h1.92V1320.3zM2261.18 1320.3V1264.2h1.92V1320.3zM2262.30 1320.3V1208.1h1.92V1320.3zM2263.42 1320.3V1241.7h1.92V1320.3zM2264.54 1320.3V1264.2h3.04V1320.3zM2266.78 1320.3V1286.6h5.28V1320.3zM2271.27 1320.3V1253.0h1.92V1320.3zM2272.39 1320.3V1241.7h3.04V1320.3zM2274.63 1320.3V1264.2h1.92V1320.3zM2275.75 1320.3V1230.5h1.92V1320.3zM2276.87 1320.3V1073.4h1.92V1320.3zM2277.99 1320.3V1196.9h1.92V1320.3zM2279.12 1320.3V1230.5h1.92V1320.3zM2280.24 1320.3V1174.4h1.92V1320.3zM2281.36 1320.3V1196.9h1.92V1320.3zM2282.48 1320.3V1230.5h1.92V1320.3zM2283.60 1320.3V1241.7h3.04V1320.3zM2285.84 1320.3V1253.0h1.92V1320.3zM2286.96 1320.3V1241.7h1.92V1320.3zM2288.09 1320.3V1230.5h1.92V1320.3zM2289.21 1320.3V1140.7h1.92V1320.3zM2290.33 1320.3V1163.2h1.92V1320.3zM2291.45 1320.3V1140.7h1.92V1320.3zM2292.57 1320.3V1208.1h1.92V1320.3zM2293.69 1320.3V1241.7h1.92V1320.3zM2294.81 1320.3V1230.5h1.92V1320.3zM2295.93 1320.3V1208.1h1.92V1320.3zM2297.05 1320.3V1185.6h1.92V1320.3zM2298.18 1320.3V1196.9h1.92V1320.3zM2299.30 1320.3V1208.1h1.92V1320.3zM2300.42 1320.3V1196.9h1.92V1320.3zM2301.54 1320.3V1230.5h1.92V1320.3zM2302.66 1320.3V1253.0h1.92V1320.3zM2303.78 1320.3V1241.7h1.92V1320.3zM2304.90 1320.3V1253.0h1.92V1320.3zM2306.02 1320.3V1241.7h1.92V1320.3zM2307.15 1320.3V1253.0h1.92V1320.3zM2308.27 1320.3V1241.7h1.92V1320.3zM2309.39 1320.3V1275.4h1.92V1320.3zM2310.51 1320.3V1297.9h3.04V1320.3zM2312.75 1320.3V1309.1h1.92V1320.3zM2313.87 1320.3V1297.9h7.53V1320.3zM2320.60 1320.3V1309.1h1.92V1320.3z" fill="#239170"/>
<path d="M156.0 1264.19H2416.3M156.0 1208.08H2416.3M156.0 1151.97H2416.3M156.0 1095.86H2416.3M156.0 1039.74H2416.3M156.0 983.63H2416.3M156.0 927.52H2416.3M156.0 871.41H2416.3" stroke="#000" stroke-opacity="0.045" stroke-width="1" fill="none"/>
<path d="M155.0 815.3V1321.3" stroke="#666" stroke-width="2" fill="none"/>
<path d="M156.0 1321.1H2416.3" stroke="#777" stroke-width="1.6" fill="none"/>
<path d="M145.0 1320.30H154.0M145.0 1264.19H154.0M145.0 1208.08H154.0M145.0 1151.97H154.0M145.0 1095.86H154.0M145.0 1039.74H154.0M145.0 983.63H154.0M145.0 927.52H154.0M145.0 871.41H154.0M145.0 815.30H154.0" stroke="#aaa" stroke-width="1.2" fill="none"/>
<path d="M156.50 1321.3V1331.8M479.40 1321.3V1331.8M802.30 1321.3V1331.8M1125.20 1321.3V1331.8M1448.10 1321.3V1331.8M1771.00 1321.3V1331.8M2093.90 1321.3V1331.8" stroke="#9a9a9a" stroke-width="1.4" fill="none"/>
<text x="133.5" y="1326.8" font-size="18.6" letter-spacing="1.2" text-anchor="end" fill="#444">0</text>
<text x="133.5" y="1270.7" font-size="18.6" letter-spacing="1.2" text-anchor="end" fill="#444">5</text>
<text x="133.5" y="1214.6" font-size="18.6" letter-spacing="1.2" text-anchor="end" fill="#444">10</text>
<text x="133.5" y="1158.5" font-size="18.6" letter-spacing="1.2" text-anchor="end" fill="#444">15</text>
<text x="133.5" y="1102.4" font-size="18.6" letter-spacing="1.2" text-anchor="end" fill="#444">20</text>
<text x="133.5" y="1046.2" font-size="18.6" letter-spacing="1.2" text-anchor="end" fill="#444">25</text>
<text x="133.5" y="990.1" font-size="18.6" letter-spacing="1.2" text-anchor="end" fill="#444">30</text>
<text x="133.5" y="934.0" font-size="18.6" letter-spacing="1.2" text-anchor="end" fill="#444">35</text>
<text x="133.5" y="877.9" font-size="18.6" letter-spacing="1.2" text-anchor="end" fill="#444">40</text>
<text x="133.5" y="821.8" font-size="18.6" letter-spacing="1.2" text-anchor="end" fill="#444">45</text>
<text x="156.5" y="1356.5" font-size="19" letter-spacing="1.7" text-anchor="middle" fill="#1a1a1a" stroke="#1a1a1a" stroke-width="0.4">mar. 07</text>
<text x="479.4" y="1356.5" font-size="19" letter-spacing="1.7" text-anchor="middle" fill="#1a1a1a" stroke="#1a1a1a" stroke-width="0.4">mer. 08</text>
<text x="802.3" y="1356.5" font-size="19" letter-spacing="1.7" text-anchor="middle" fill="#1a1a1a" stroke="#1a1a1a" stroke-width="0.4">jeu. 09</text>
<text x="1125.2" y="1356.5" font-size="19" letter-spacing="1.7" text-anchor="middle" fill="#1a1a1a" stroke="#1a1a1a" stroke-width="0.4">ven. 10</text>
<text x="1448.1" y="1356.5" font-size="19" letter-spacing="1.7" text-anchor="middle" fill="#1a1a1a" stroke="#1a1a1a" stroke-width="0.4">sam. 11</text>
<text x="1771.0" y="1356.5" font-size="19" letter-spacing="1.7" text-anchor="middle" fill="#1a1a1a" stroke="#1a1a1a" stroke-width="0.4">dim. 12</text>
<text x="2093.9" y="1356.5" font-size="19" letter-spacing="1.7" text-anchor="middle" fill="#1a1a1a" stroke="#1a1a1a" stroke-width="0.4">lun. 13</text>
<text transform="translate(86,1067) rotate(-90)" font-size="21" text-anchor="middle" fill="#444">kW</text>
<path d="M1990 57H2406V89a9 9 0 0 1 -9 9H1999a9 9 0 0 1 -9 -9z" fill="#fff"/>
<text x="2198" y="88.6" font-size="25" font-weight="bold" letter-spacing="0.25" text-anchor="middle" fill="#000">LHB-site-L651</text>
<rect x="1992.3" y="108.3" width="412.2" height="57.6" rx="10" fill="#fff" stroke="#808080" stroke-width="3.2"/>
<text x="2208" y="147.5" font-size="28" text-anchor="middle" fill="#000" xml:space="preserve">Consommation: 133 kWh</text>
<rect x="1992.3" y="178.3" width="412.2" height="57.6" rx="10" fill="#fff" stroke="#808080" stroke-width="3.2"/>
<text x="2208" y="217.5" font-size="28" text-anchor="middle" fill="#000" xml:space="preserve">P Max :  22 kW</text>
<rect x="1992.3" y="248.3" width="412.2" height="57.6" rx="10" fill="#fff" stroke="#808080" stroke-width="3.2"/>
<text x="2208" y="287.5" font-size="28" text-anchor="middle" fill="#000" xml:space="preserve">P min : 1 kW</text>
<rect x="562.3" y="806.3" width="412.2" height="57.6" rx="10" fill="#fff" stroke="#808080" stroke-width="3.2"/>
<text x="778" y="845.5" font-size="28" text-anchor="middle" fill="#000" xml:space="preserve">Consommation: 919 kWh</text>
<rect x="1099.8" y="806.3" width="412.2" height="57.6" rx="10" fill="#fff" stroke="#808080" stroke-width="3.2"/>
<text x="1316" y="845.5" font-size="28" text-anchor="middle" fill="#000" xml:space="preserve">P Max :  40 kW</text>
<rect x="1609.8" y="806.3" width="412.2" height="57.6" rx="10" fill="#fff" stroke="#808080" stroke-width="3.2"/>
<text x="1826" y="845.5" font-size="28" text-anchor="middle" fill="#000" xml:space="preserve">P min : 1 kW</text>
<rect x="1048" y="542" width="522" height="70" rx="10" fill="#fff" fill-opacity="0.9"/>
<text x="1314.3" y="588.8" font-size="31.5" font-weight="bold" letter-spacing="0.65" text-anchor="middle" fill="#0c0c0c">lundi 13 avril 2026</text>
<rect x="176.6" y="49" width="481.6" height="78" fill="#0a0a18"/>
<defs><linearGradient id="eco2" gradientUnits="userSpaceOnUse" x1="0" y1="355" x2="0" y2="712"><stop offset="0" stop-color="#00f7d4"/><stop offset="0.5" stop-color="#00f2cf"/><stop offset="0.54" stop-color="#08a790"/><stop offset="1" stop-color="#03d2b1"/></linearGradient></defs>
<g transform="translate(176,48) scale(0.08764)" fill="none" stroke-linecap="round" stroke-linejoin="round">
<g stroke="url(#eco2)" stroke-width="76">
<path d="M190 530H400A110 138 0 1 0 379 625"/>
<path d="M712 450A118 140 0 1 0 712 616"/>
<ellipse cx="927" cy="533" rx="120" ry="140"/>
</g>
<path d="M262 300L325 272" stroke="#00f2cf" stroke-width="64"/>
<g stroke="#fff" stroke-width="74">
<path d="M1132 442L1225 688L1320 385L1410 688L1575 228"/>
<path d="M1605 432C1660 385 1812 365 1812 485V688M1812 535H1690C1560 535 1560 672 1690 672C1770 672 1812 640 1812 590"/>
<path d="M1945 298V610C1945 665 1975 682 2035 680M2120 298V610C2120 665 2150 682 2205 680M1895 385H2225"/>
</g></g>
<ellipse cx="434" cy="89.1" rx="26" ry="28.2" fill="#00b4e0"/>
<text x="418.6" y="96.4" font-size="24" textLength="31.7" lengthAdjust="spacingAndGlyphs" fill="#fff">Rte</text>
<path d="M419 93.5H450" stroke="#fff" stroke-width="1.6"/>
<text x="468.3" y="79.2" font-size="13" textLength="48" lengthAdjust="spacingAndGlyphs" fill="#00a0d2">Le réseau</text>
<text x="468.3" y="92.1" font-size="13" textLength="61" lengthAdjust="spacingAndGlyphs" fill="#00a0d2">de transport</text>
<text x="468.3" y="105" font-size="13" textLength="56.7" lengthAdjust="spacingAndGlyphs" fill="#00a0d2">d’électricité</text>
<rect x="546.5" y="61.4" width="100.5" height="55.4" fill="#fff"/>
<rect x="553.2" y="68.6" width="7.3" height="6.8" fill="#27348b"/><rect x="564.8" y="68.6" width="7.3" height="6.8" fill="#e1000f"/><path d="M560.5 69.5c2.5 0.5 3 3.5 1.2 5.9h3.1v-6.8z" fill="#e1000f" opacity="0.35"/>
<text x="553.2" y="84.9" font-size="7.4" font-weight="bold" textLength="43.3" lengthAdjust="spacingAndGlyphs" fill="#222">RÉPUBLIQUE</text>
<text x="553.2" y="92.9" font-size="7.4" font-weight="bold" textLength="40.1" lengthAdjust="spacingAndGlyphs" fill="#222">FRANÇAISE</text>
<path d="M553.7 98.5h11M553.7 103.7h11.5M553.7 108.8h16.5" stroke="#8a8a8a" stroke-width="1.3" opacity="0.8"/>
<rect x="607.5" y="67" width="34" height="44.3" fill="#fff" stroke="#5a8fd8" stroke-width="1.4"/>
<text x="611.6" y="74.9" font-size="7" font-weight="bold" textLength="25.3" lengthAdjust="spacingAndGlyphs" fill="#e4252b">ADEME</text>
<circle cx="624.2" cy="86.9" r="8.6" fill="#1f4ea6"/><path d="M619.5 84c1.5-2.5 4-3 6-2.5c-1 1.5 0.5 2.5 1.5 3.5s-2 2-1.5 4-1.5 3.5-3 4.5c0.5-2-1-3-1.5-4.5s0-3-1.5-5z" fill="#8ea6df" opacity="0.85"/>
<path d="M611.6 100.7h25.3M611.6 104.1h25.3M611.6 107.5h25.3" stroke="#e4252b" stroke-width="1.5" stroke-dasharray="1.6 0.7" opacity="0.85"/>
<rect x="169" y="135" width="491.6" height="124" fill="#dcdcdc"/>
<rect x="172.7" y="139.1" width="116.6" height="49.6" fill="#f1f1f1"/>
<rect x="172.7" y="194.4" width="116.6" height="58.5" fill="#f6f6f6"/>
<text x="232.0" y="174.5" font-size="33" letter-spacing="1.5" text-anchor="middle" fill="#000">J</text>
<g transform="translate(180.2,195.4) scale(1.0610,0.5440)"><rect width="100" height="100" fill="url(#tile)"/><path d="M14 0C30 14 46 45 68 45C82 45 92 38 100 32V0z" fill="#00edc9"/><path d="M28 0C42 8 55 23 72 23C84 23 93 14 100 7V0z" fill="#00a58c"/></g>
<rect x="294.6" y="139.1" width="117.2" height="49.6" fill="#f1f1f1"/>
<rect x="294.6" y="194.4" width="117.2" height="58.5" fill="#f6f6f6"/>
<text x="354.2" y="174.5" font-size="33" letter-spacing="1.5" text-anchor="middle" fill="#000">J + 1</text>
<g transform="translate(302.3,196) scale(1.0580,0.5590)"><rect width="100" height="100" fill="url(#tile)"/><path d="M14 0C30 14 46 45 68 45C82 45 92 38 100 32V0z" fill="#00edc9"/><path d="M28 0C42 8 55 23 72 23C84 23 93 14 100 7V0z" fill="#00a58c"/></g>
<rect x="416.9" y="139.1" width="116.8" height="49.6" fill="#f1f1f1"/>
<rect x="416.9" y="194.4" width="116.8" height="58.5" fill="#f6f6f6"/>
<text x="476.3" y="174.5" font-size="33" letter-spacing="3.1" text-anchor="middle" fill="#000">J + <tspan font-weight="bold">2</tspan></text>
<g transform="translate(424,196) scale(1.0620,0.5590)"><rect width="100" height="100" fill="url(#tile)"/><path d="M14 0C30 14 46 45 68 45C82 45 92 38 100 32V0z" fill="#00edc9"/><path d="M28 0C42 8 55 23 72 23C84 23 93 14 100 7V0z" fill="#00a58c"/></g>
<rect x="538.7" y="139.1" width="117.4" height="49.6" fill="#f1f1f1"/>
<rect x="538.7" y="194.4" width="117.4" height="58.5" fill="#f6f6f6"/>
<text x="598.4" y="174.5" font-size="33" letter-spacing="3.1" text-anchor="middle" fill="#000">J + <tspan font-weight="bold">3</tspan></text>
<g transform="translate(544.2,196) scale(1.0620,0.5590)"><rect width="100" height="100" fill="url(#tile)"/><path d="M14 0C30 14 46 45 68 45C82 45 92 38 100 32V0z" fill="#00edc9"/><path d="M28 0C42 8 55 23 72 23C84 23 93 14 100 7V0z" fill="#00a58c"/></g>
<path d="M2322 1322H2437.7V1373a8 8 0 0 1 -8 8H2322z" fill="#fff"/>
<g transform="translate(2280,1290)">
<path d="M82.6 54.2A13 13 0 1 0 82.5 62.2H69.5" stroke="#0a72ba" stroke-width="4.6" fill="none" stroke-linecap="round" stroke-linejoin="round"/>
<path d="M89.5 56.5C87 50 91 48 96 48C102 48 106 53 102 59L92 72.8H105.5" stroke="#0a72ba" stroke-width="4.6" fill="none" stroke-linejoin="miter"/>
<path d="M112.3 34.6L103.9 48.2L119.5 48.2L109.5 73L113 55.5L104 48.2z" fill="#ec5b24"/>
<path d="M112.3 34.6L103.9 48.2H113.5L109.5 73L119.5 48.2H112z" fill="#ec5b24"/>
<text x="113" y="44.5" font-size="6.6" font-weight="bold" fill="#ec5b24" letter-spacing="0.2">FRANCE</text>
<path d="M123.3 49h21l-5.5 6h-18.5zM118.8 58.2h19.6l-4.6 6h-18.3zM114.5 67.3h22.3l-4.8 5.7h-19.5z" fill="#f29222"/>
<path d="M60 76.9h74" stroke="#4a97d0" stroke-width="1.4" stroke-dasharray="3 0.6" opacity="0.75"/>
</g>
</svg></body></html>
